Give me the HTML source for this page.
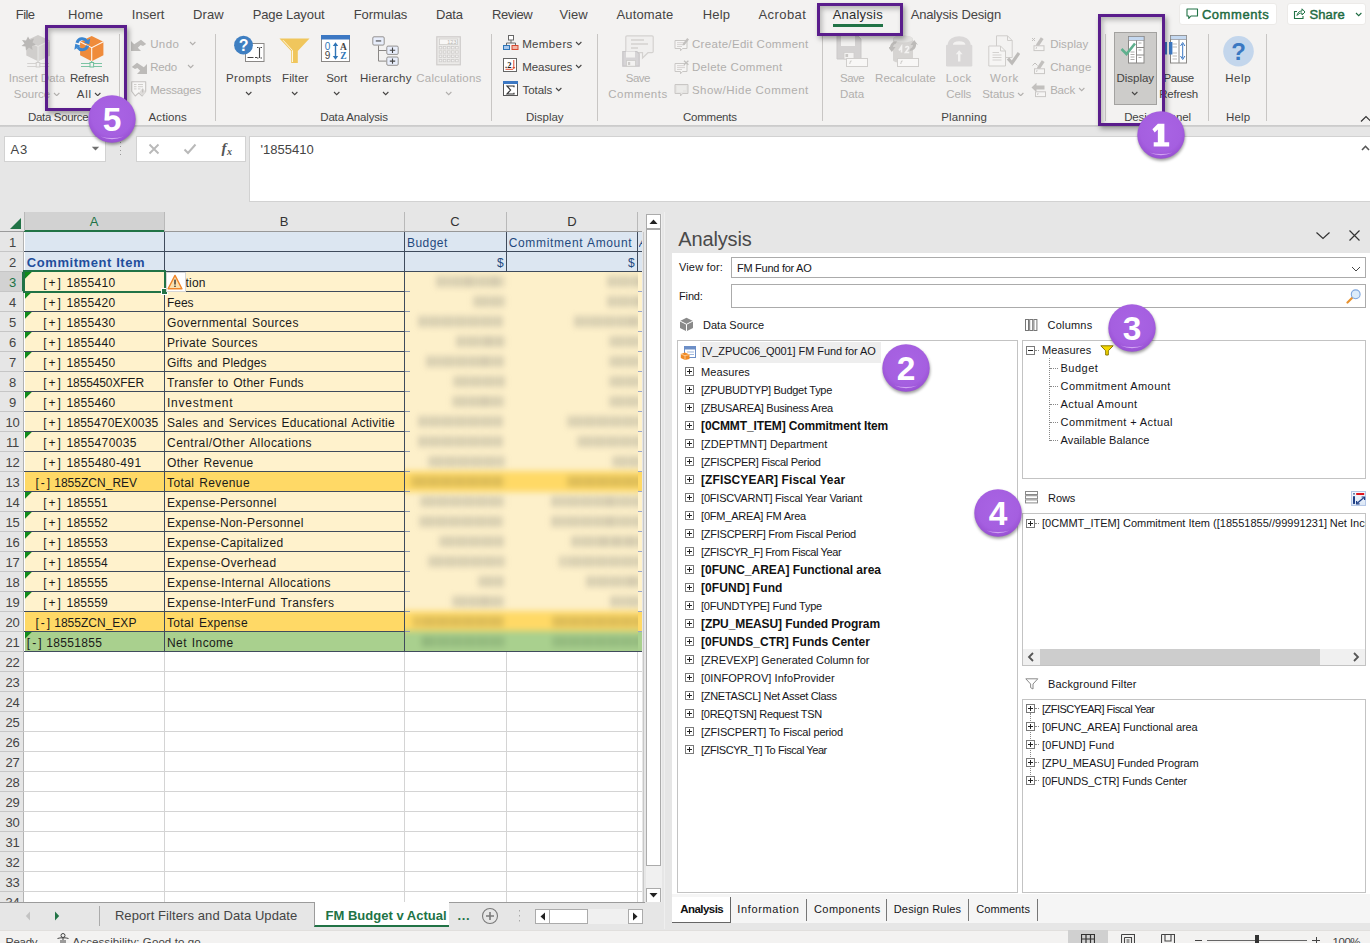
<!DOCTYPE html>
<html><head><meta charset="utf-8"><title>Excel</title><style>html,body{margin:0;padding:0;overflow:hidden;font-family:"Liberation Sans",sans-serif;}body{width:1370px;height:943px;background:#e6e6e6;}#root{position:relative;width:1370px;height:943px;overflow:hidden;background:#e6e6e6;}.b{position:absolute;display:block;}.t{position:absolute;white-space:pre;line-height:normal;display:block;}</style></head><body><div id="root"><div class="b" style="left:0px;top:0px;width:1370px;height:126px;background:#f3f2f1;"></div><div class="b" style="left:0px;top:125px;width:1370px;height:10px;background:linear-gradient(#c9c9c9,#d8d8d8 30%,#e2e2e2 65%,#e6e6e6);"></div><span class="t" style="left:15.78px;top:6.80px;font-size:13px;color:#454443;letter-spacing:-0.561px;">File</span><span class="t" style="left:67.98px;top:6.80px;font-size:13px;color:#454443;letter-spacing:0.128px;">Home</span><span class="t" style="left:131.78px;top:6.80px;font-size:13px;color:#454443;letter-spacing:0.011px;">Insert</span><span class="t" style="left:192.88px;top:6.80px;font-size:13px;color:#454443;letter-spacing:0.142px;">Draw</span><span class="t" style="left:252.68px;top:6.80px;font-size:13px;color:#454443;letter-spacing:-0.105px;">Page Layout</span><span class="t" style="left:353.78px;top:6.80px;font-size:13px;color:#454443;letter-spacing:-0.088px;">Formulas</span><span class="t" style="left:435.98px;top:6.80px;font-size:13px;color:#454443;letter-spacing:-0.166px;">Data</span><span class="t" style="left:491.98px;top:6.80px;font-size:13px;color:#454443;letter-spacing:-0.391px;">Review</span><span class="t" style="left:559.48px;top:6.80px;font-size:13px;color:#454443;letter-spacing:0.072px;">View</span><span class="t" style="left:616.48px;top:6.80px;font-size:13px;color:#454443;letter-spacing:0.159px;">Automate</span><span class="t" style="left:702.78px;top:6.80px;font-size:13px;color:#454443;letter-spacing:0.140px;">Help</span><span class="t" style="left:758.48px;top:6.80px;font-size:13px;color:#454443;letter-spacing:0.426px;">Acrobat</span><span class="t" style="left:832.68px;top:6.80px;font-size:13px;color:#2b2b2b;letter-spacing:0.221px;">Analysis</span><span class="t" style="left:910.68px;top:6.80px;font-size:13px;color:#454443;letter-spacing:-0.145px;">Analysis Design</span><div class="b" style="left:833px;top:24px;width:50px;height:3px;background:#217346;"></div><div class="b" style="left:1179px;top:3px;width:98px;height:22px;background:#fff;border-radius:3px;border:1px solid #eceae8;box-sizing:border-box;"></div><svg class="b" style="left:1186px;top:8px;" width="13" height="12" viewBox="0 0 13 12"><path d="M1 1 H11.5 V8 H5 L2.8 10.5 V8 H1 Z" fill="none" stroke="#217346" stroke-width="1.1" stroke-linejoin="round"/></svg><span class="t" style="left:1201.88px;top:6.50px;font-size:13px;color:#1e6b41;letter-spacing:0.559px;-webkit-text-stroke:0.45px #1e6b41;">Comments</span><div class="b" style="left:1287px;top:3px;width:79px;height:22px;background:#fff;border-radius:3px;border:1px solid #eceae8;box-sizing:border-box;"></div><svg class="b" style="left:1293px;top:7px;" width="13" height="13" viewBox="0 0 13 13"><path d="M4 4.5 H1.5 V11.5 H10 V9" fill="none" stroke="#217346" stroke-width="1.1"/><path d="M4 8.5 C4.5 5.5 6.5 4 9 4 V1.8 L12 5 L9 8 V6 C7 6 5.2 6.8 4 8.5 Z" fill="none" stroke="#217346" stroke-width="1" stroke-linejoin="round"/></svg><span class="t" style="left:1309.48px;top:6.50px;font-size:13px;color:#1e6b41;letter-spacing:0.117px;-webkit-text-stroke:0.45px #1e6b41;">Share</span><svg class="b" style="left:1354.6px;top:12.15px;" width="7.4" height="4.7" viewBox="0 0 7.4 4.7"><path d="M1 1 L3.7 3.7 L6.4 1" stroke="#1e6b41" stroke-width="1.1" fill="none"/></svg><div class="b" style="left:119px;top:34px;width:1px;height:87px;background:#c8c6c4;"></div><div class="b" style="left:215px;top:34px;width:1px;height:87px;background:#c8c6c4;"></div><div class="b" style="left:491px;top:34px;width:1px;height:87px;background:#c8c6c4;"></div><div class="b" style="left:597px;top:34px;width:1px;height:87px;background:#c8c6c4;"></div><div class="b" style="left:822px;top:34px;width:1px;height:87px;background:#c8c6c4;"></div><div class="b" style="left:1105px;top:34px;width:1px;height:87px;background:#c8c6c4;"></div><div class="b" style="left:1208px;top:34px;width:1px;height:87px;background:#c8c6c4;"></div><div class="b" style="left:1266px;top:34px;width:1px;height:87px;background:#c8c6c4;"></div><span class="t" style="left:28.04px;top:110.50px;font-size:11.5px;color:#444;letter-spacing:-0.340px;">Data Source</span><span class="t" style="left:148.54px;top:110.50px;font-size:11.5px;color:#444;letter-spacing:0.103px;">Actions</span><span class="t" style="left:320.24px;top:110.50px;font-size:11.5px;color:#444;letter-spacing:-0.163px;">Data Analysis</span><span class="t" style="left:526.04px;top:110.50px;font-size:11.5px;color:#444;letter-spacing:-0.031px;">Display</span><span class="t" style="left:683.04px;top:110.50px;font-size:11.5px;color:#444;letter-spacing:-0.239px;">Comments</span><span class="t" style="left:941.34px;top:110.50px;font-size:11.5px;color:#444;letter-spacing:0.110px;">Planning</span><span class="t" style="left:1124.14px;top:110.50px;font-size:11.5px;color:#444;letter-spacing:-0.143px;">Design Panel</span><span class="t" style="left:1226.04px;top:110.50px;font-size:11.5px;color:#444;letter-spacing:0.126px;">Help</span><svg class="b" style="left:1360px;top:115px;" width="11" height="8" viewBox="0 0 11 8"><path d="M1 6.5 L6 1.5 L11 6.5" stroke="#333" stroke-width="1.2" fill="none"/></svg><svg class="b" style="left:21px;top:34px;" width="30" height="34" viewBox="0 0 30 34"><path d="M17 1 L29 6.5 L29 21.5 L17 27.3 L5.3 21.5 L5.3 6.5 Z" fill="#d0cecc"/><path d="M17 12.5 L29 6.5 L29 21.5 L17 27.3 Z" fill="#d8d6d4"/><path d="M5.3 6.5 L17 12.5 L29 6.5 M17 12.5 V27.3" stroke="#e6e5e3" stroke-width="1.1" fill="none"/><path d="M7 2.5 L9 6 L13 4.5 L11.5 8.5 L15 10.5 L11 12 L11.5 16 L8 13.5 L5 16.5 L4.5 12.5 L0.5 12 L3.5 9.5 L1 6 L5 6.5 Z" fill="#bab8b6"/><path d="M17 27 V30" stroke="#cfcdcb" stroke-width="1.2"/><path d="M6.2 29.5 H28 M6.2 32.5 H28" stroke="#d4d2d0" stroke-width="1"/><rect x="15.2" y="28.5" width="3.6" height="4.5" fill="#f3f2f1" stroke="#cfcdcb" stroke-width="1"/></svg><span class="t" style="left:8.74px;top:71.80px;font-size:11.5px;color:#b1afad;letter-spacing:0.018px;">Insert Data</span><span class="t" style="left:13.84px;top:87.60px;font-size:11.5px;color:#b1afad;letter-spacing:-0.041px;">Source</span><svg class="b" style="left:52.599999999999994px;top:91.65px;" width="7.4" height="4.7" viewBox="0 0 7.4 4.7"><path d="M1 1 L3.7 3.7 L6.4 1" stroke="#b1afad" stroke-width="1.1" fill="none"/></svg><svg class="b" style="left:74px;top:35px;" width="31" height="34" viewBox="0 0 31 34"><path d="M17.7 0.9 L29.4 6.8 L29.4 20.2 L17.7 26.3 L6.1 20.2 L6.1 6.8 Z" fill="#ef8b3b"/><path d="M6.1 6.8 L17.7 12.7 L29.4 6.8 M17.7 12.7 V26.3" stroke="#fff" stroke-width="1.1" fill="none" stroke-opacity=".92"/><path d="M2.99 7.78 A5.5 5.5 0 0 1 12.8 6.04" stroke="#3b86d0" stroke-width="3" fill="none"/><path d="M15.3 9.6 L16.2 3.6 L9.8 7.6 Z" fill="#3b86d0"/><path d="M13.61 10.62 A5.5 5.5 0 0 1 3.8 12.36" stroke="#3b86d0" stroke-width="3" fill="none"/><path d="M1.3 8.8 L0.4 14.8 L6.8 10.8 Z" fill="#3b86d0"/><path d="M17.7 26 V29" stroke="#6fbf9b" stroke-width="1.2"/><path d="M7 28.5 H28 M7 31.5 H28" stroke="#7cc4a4" stroke-width="1"/><rect x="16" y="27.5" width="3.6" height="4.5" fill="#f3f2f1" stroke="#6fbf9b" stroke-width="1"/></svg><span class="t" style="left:70.04px;top:71.80px;font-size:11.5px;color:#454443;letter-spacing:-0.241px;">Refresh</span><span class="t" style="left:76.74px;top:87.60px;font-size:11.5px;color:#454443;letter-spacing:0.827px;">All</span><svg class="b" style="left:93.89999999999999px;top:91.65px;" width="7.4" height="4.7" viewBox="0 0 7.4 4.7"><path d="M1 1 L3.7 3.7 L6.4 1" stroke="#454443" stroke-width="1.1" fill="none"/></svg><svg class="b" style="left:131px;top:39px;" width="16" height="13" viewBox="0 0 16 13"><path d="M0 1.9 L0 12 L10 12 L6.8 8.8 L9.6 5.9 L12 7.1 L15.2 5 L10 0.8 L3.2 5.2 Z" fill="#bdbbb9"/></svg><span class="t" style="left:150.14px;top:37.80px;font-size:11.5px;color:#b1afad;letter-spacing:0.412px;">Undo</span><svg class="b" style="left:188.9px;top:41.15px;" width="7.4" height="4.7" viewBox="0 0 7.4 4.7"><path d="M1 1 L3.7 3.7 L6.4 1" stroke="#b1afad" stroke-width="1.1" fill="none"/></svg><svg class="b" style="left:131.3px;top:62px;" width="17" height="13" viewBox="0 0 17 13"><path d="M16 1.9 L16 12 L6 12 L9.2 8.8 L6.4 5.9 L4 7.1 L0.8 5 L6 0.8 L12.8 5.2 Z" fill="#bdbbb9"/></svg><span class="t" style="left:150.14px;top:60.50px;font-size:11.5px;color:#b1afad;letter-spacing:-0.155px;">Redo</span><svg class="b" style="left:186.8px;top:63.85000000000001px;" width="7.4" height="4.7" viewBox="0 0 7.4 4.7"><path d="M1 1 L3.7 3.7 L6.4 1" stroke="#b1afad" stroke-width="1.1" fill="none"/></svg><svg class="b" style="left:130.8px;top:80.6px;" width="16" height="16" viewBox="0 0 16 16"><path d="M0.7 0.7 H14.7 V10.2 L11.2 15 L7.7 11.8 L4.2 15 L0.7 10.2 Z" fill="#f7f6f5" stroke="#c6c4c2" stroke-width="1.1" stroke-linejoin="round"/><path d="M3 3.5 H5.5 M7 3.5 H12 M3 5.7 H5.5 M7 5.7 H12 M3 7.9 H5.5 M7 7.9 H9.5" stroke="#d0cecc" stroke-width="1"/><path d="M8.2 11.6 L11.6 6.8 L15 11.6 L11.6 14.6 Z" fill="#dddbd9"/><rect x="11.2" y="8.2" width="1" height="3.2" fill="#bdbbb9"/></svg><span class="t" style="left:150.14px;top:83.70px;font-size:11.5px;color:#b1afad;letter-spacing:-0.198px;">Messages</span><svg class="b" style="left:234px;top:35px;" width="31" height="28" viewBox="0 0 31 28"><rect x="11.5" y="8.5" width="18.5" height="18" fill="#fff" stroke="#8a8886" stroke-width="1"/><path d="M13.5 22.5 H19.5 M21 22.5 H23" stroke="#444" stroke-width="1"/><path d="M23 12.5 H24.5 M26.5 12.5 H28 M23 23 H24.5 M26.5 23 H28 M25.5 12.5 V23" stroke="#444" stroke-width="1.1" fill="none"/><circle cx="9.5" cy="10.2" r="9.4" fill="#3f7fc1"/><text x="9.6" y="16" font-family="Liberation Sans" font-weight="700" font-size="16" fill="#fff" text-anchor="middle">?</text></svg><span class="t" style="left:225.94px;top:71.80px;font-size:11.5px;color:#454443;letter-spacing:0.418px;">Prompts</span><svg class="b" style="left:244.8px;top:91.35000000000001px;" width="7.4" height="4.7" viewBox="0 0 7.4 4.7"><path d="M1 1 L3.7 3.7 L6.4 1" stroke="#454443" stroke-width="1.1" fill="none"/></svg><svg class="b" style="left:279px;top:38px;" width="31" height="26" viewBox="0 0 31 26"><path d="M0.5 0.5 H30.5 L18.8 13 V25 H12.2 V13 Z" fill="#f0c65c"/><path d="M4 2.2 L13.5 12.5 V24" stroke="#fff6dd" stroke-width="1" fill="none"/></svg><span class="t" style="left:281.94px;top:71.80px;font-size:11.5px;color:#454443;letter-spacing:0.175px;">Filter</span><svg class="b" style="left:290.7px;top:91.35000000000001px;" width="7.4" height="4.7" viewBox="0 0 7.4 4.7"><path d="M1 1 L3.7 3.7 L6.4 1" stroke="#454443" stroke-width="1.1" fill="none"/></svg><svg class="b" style="left:321px;top:35px;" width="29" height="27" viewBox="0 0 29 27"><rect x="0.5" y="0.5" width="28" height="26" fill="#fff" stroke="#8a8886" stroke-width="1"/><rect x="0" y="0" width="29" height="4.5" fill="#3c78c3"/><text x="6.5" y="14.8" font-family="Liberation Sans" font-size="10" fill="#2e75b6" text-anchor="middle">0</text><text x="6.5" y="24.3" font-family="Liberation Sans" font-size="10" fill="#444" text-anchor="middle">9</text><text x="22.5" y="15" font-family="Liberation Serif" font-weight="700" font-size="9.5" fill="#444" text-anchor="middle">A</text><text x="22.5" y="24.3" font-family="Liberation Serif" font-weight="700" font-size="9.5" fill="#2e75b6" text-anchor="middle">Z</text><path d="M14.5 9 V23" stroke="#2e75b6" stroke-width="1.4"/><path d="M11.8 11 L14.5 7.3 L17.2 11 Z M11.8 21 L14.5 24.7 L17.2 21 Z" fill="#2e75b6"/></svg><span class="t" style="left:326.14px;top:71.80px;font-size:11.5px;color:#454443;letter-spacing:0.014px;">Sort</span><svg class="b" style="left:332.6px;top:91.35000000000001px;" width="7.4" height="4.7" viewBox="0 0 7.4 4.7"><path d="M1 1 L3.7 3.7 L6.4 1" stroke="#454443" stroke-width="1.1" fill="none"/></svg><svg class="b" style="left:372px;top:36px;" width="27" height="30" viewBox="0 0 27 30"><path d="M6.5 9.6 V25.1 H14.5 M6.5 14.5 H14.5" stroke="#8a8886" stroke-width="1" fill="none"/><rect x="0.8" y="0.8" width="11.4" height="8.3" rx="1.2" fill="#e8eefb" stroke="#8a8886" stroke-width="0.9"/><path d="M3.8 4.95 h5.4" stroke="#444" stroke-width="1.1"/><rect x="14.8" y="10.1" width="11.4" height="8.3" rx="1.2" fill="#e8eefb" stroke="#8a8886" stroke-width="0.9"/><path d="M17.8 14.25 h5.4 M20.5 11.549999999999999 v5.4" stroke="#444" stroke-width="1.1"/><rect x="14.8" y="21.0" width="11.4" height="8.3" rx="1.2" fill="#e8eefb" stroke="#8a8886" stroke-width="0.9"/><path d="M17.8 25.15 h5.4 M20.5 22.45 v5.4" stroke="#444" stroke-width="1.1"/></svg><span class="t" style="left:360.04px;top:71.80px;font-size:11.5px;color:#454443;letter-spacing:0.277px;">Hierarchy</span><svg class="b" style="left:381.7px;top:91.35000000000001px;" width="7.4" height="4.7" viewBox="0 0 7.4 4.7"><path d="M1 1 L3.7 3.7 L6.4 1" stroke="#454443" stroke-width="1.1" fill="none"/></svg><svg class="b" style="left:436px;top:36px;" width="25" height="30" viewBox="0 0 25 30"><rect x="0.8" y="0.8" width="23.5" height="28" fill="#ebeae8" stroke="#cfcdcb" stroke-width="1.2"/><rect x="3.5" y="3" width="18" height="5.6" fill="#f8f7f6" stroke="#cfcdcb" stroke-width="0.8"/><text x="20.5" y="8" font-family="Liberation Sans" font-size="5.5" fill="#b5b3b1" text-anchor="end">123</text><rect x="3.2" y="10.5" width="2.6" height="2.4" fill="#f3f2f1" stroke="#cfcdcb" stroke-width="0.8"/><rect x="3.2" y="14.8" width="2.6" height="2.4" fill="#f3f2f1" stroke="#cfcdcb" stroke-width="0.8"/><rect x="3.2" y="19.1" width="2.6" height="2.4" fill="#f3f2f1" stroke="#cfcdcb" stroke-width="0.8"/><rect x="3.2" y="23.4" width="2.6" height="2.4" fill="#f3f2f1" stroke="#cfcdcb" stroke-width="0.8"/><rect x="7.3" y="10.5" width="2.6" height="2.4" fill="#f3f2f1" stroke="#cfcdcb" stroke-width="0.8"/><rect x="7.3" y="14.8" width="2.6" height="2.4" fill="#f3f2f1" stroke="#cfcdcb" stroke-width="0.8"/><rect x="7.3" y="19.1" width="2.6" height="2.4" fill="#f3f2f1" stroke="#cfcdcb" stroke-width="0.8"/><rect x="7.3" y="23.4" width="2.6" height="2.4" fill="#f3f2f1" stroke="#cfcdcb" stroke-width="0.8"/><rect x="11.4" y="10.5" width="2.6" height="2.4" fill="#f3f2f1" stroke="#cfcdcb" stroke-width="0.8"/><rect x="11.4" y="14.8" width="2.6" height="2.4" fill="#f3f2f1" stroke="#cfcdcb" stroke-width="0.8"/><rect x="11.4" y="19.1" width="2.6" height="2.4" fill="#f3f2f1" stroke="#cfcdcb" stroke-width="0.8"/><rect x="11.4" y="23.4" width="2.6" height="2.4" fill="#f3f2f1" stroke="#cfcdcb" stroke-width="0.8"/><rect x="15.5" y="10.5" width="2.6" height="2.4" fill="#f3f2f1" stroke="#cfcdcb" stroke-width="0.8"/><rect x="15.5" y="14.8" width="2.6" height="2.4" fill="#f3f2f1" stroke="#cfcdcb" stroke-width="0.8"/><rect x="15.5" y="19.1" width="2.6" height="2.4" fill="#f3f2f1" stroke="#cfcdcb" stroke-width="0.8"/><rect x="15.5" y="23.4" width="2.6" height="2.4" fill="#f3f2f1" stroke="#cfcdcb" stroke-width="0.8"/><rect x="19.6" y="10.5" width="2.6" height="2.4" fill="#f3f2f1" stroke="#cfcdcb" stroke-width="0.8"/><rect x="19.6" y="14.8" width="2.6" height="2.4" fill="#f3f2f1" stroke="#cfcdcb" stroke-width="0.8"/><rect x="19.6" y="19.1" width="2.6" height="2.4" fill="#f3f2f1" stroke="#cfcdcb" stroke-width="0.8"/><rect x="19.6" y="23.4" width="2.6" height="2.4" fill="#f3f2f1" stroke="#cfcdcb" stroke-width="0.8"/></svg><span class="t" style="left:416.24px;top:71.80px;font-size:11.5px;color:#b1afad;letter-spacing:0.225px;">Calculations</span><svg class="b" style="left:444.7px;top:91.35000000000001px;" width="7.4" height="4.7" viewBox="0 0 7.4 4.7"><path d="M1 1 L3.7 3.7 L6.4 1" stroke="#b1afad" stroke-width="1.1" fill="none"/></svg><svg class="b" style="left:503px;top:35px;" width="16" height="16" viewBox="0 0 16 16"><path d="M8 5 V8 M3.5 11 V8 H12.5 V11" stroke="#666" stroke-width="1" fill="none"/><rect x="5.5" y="0.5" width="5" height="4.5" fill="#fff" stroke="#666" stroke-width="1"/><rect x="0.5" y="10.5" width="6" height="4" fill="#a9c8ec" stroke="#2e75b6" stroke-width="1"/><rect x="9" y="10.5" width="6" height="4" fill="#f3b4a6" stroke="#d6492f" stroke-width="1"/></svg><span class="t" style="left:522.14px;top:37.80px;font-size:11.5px;color:#454443;letter-spacing:0.383px;">Members</span><svg class="b" style="left:574.8px;top:41.449999999999996px;" width="7.4" height="4.7" viewBox="0 0 7.4 4.7"><path d="M1 1 L3.7 3.7 L6.4 1" stroke="#454443" stroke-width="1.1" fill="none"/></svg><svg class="b" style="left:503px;top:58px;" width="14" height="14" viewBox="0 0 14 14"><rect x="0.5" y="0.5" width="13" height="13" fill="#fff" stroke="#666" stroke-width="1"/><text x="2" y="9.5" font-family="Liberation Serif" font-weight="700" font-size="8.5" fill="#222">.2</text><path d="M2.5 11.3 H10" stroke="#e04a2f" stroke-width="1"/><path d="M10.8 2 V10" stroke="#e04a2f" stroke-width="1"/><path d="M9.3 9 L10.8 11.5 L12.3 9 Z" fill="#e04a2f"/></svg><span class="t" style="left:522.14px;top:60.50px;font-size:11.5px;color:#454443;letter-spacing:-0.038px;">Measures</span><svg class="b" style="left:574.8px;top:64.15px;" width="7.4" height="4.7" viewBox="0 0 7.4 4.7"><path d="M1 1 L3.7 3.7 L6.4 1" stroke="#454443" stroke-width="1.1" fill="none"/></svg><svg class="b" style="left:503px;top:81px;" width="15" height="15" viewBox="0 0 15 15"><rect x="0.5" y="0.5" width="14" height="14" fill="#fff" stroke="#555" stroke-width="1"/><rect x="0" y="0" width="15" height="3" fill="#3c78c3"/><path d="M11 6.2 V5 H4 L7.6 9 L4 13 H11 V11.8" stroke="#333" stroke-width="1.15" fill="none"/></svg><span class="t" style="left:522.54px;top:83.70px;font-size:11.5px;color:#454443;letter-spacing:-0.082px;">Totals</span><svg class="b" style="left:554.8px;top:87.35000000000001px;" width="7.4" height="4.7" viewBox="0 0 7.4 4.7"><path d="M1 1 L3.7 3.7 L6.4 1" stroke="#454443" stroke-width="1.1" fill="none"/></svg><svg class="b" style="left:622px;top:35px;" width="32" height="32" viewBox="0 0 32 32"><path d="M5 0.8 H30 Q31.2 0.8 31.2 2 V16.5 Q31.2 17.7 30 17.7 H26 L20.5 23 V17.7 H5 Q3.8 17.7 3.8 16.5 V2 Q3.8 0.8 5 0.8 Z" fill="#f0efee" stroke="#d4d2d0" stroke-width="1.2"/><path d="M9 5 H22 M9 9 H26 M9 13 H16" stroke="#d4d2d0" stroke-width="1.6"/><path d="M0.8 16.5 H14.8 L17.2 18.8 V31.2 H0.8 Z" fill="#d6d4d6" stroke="#c8c6c8" stroke-width="1.2"/><rect x="4" y="16.5" width="9" height="6" fill="#f3f2f1"/><rect x="4.5" y="25.5" width="9" height="5.7" fill="#f3f2f1" stroke="#cdcbc9" stroke-width="0.8"/><rect x="6" y="27" width="2.2" height="3" fill="#cdcbc9"/></svg><span class="t" style="left:625.84px;top:71.80px;font-size:11.5px;color:#b1afad;letter-spacing:-0.561px;">Save</span><span class="t" style="left:608.24px;top:87.60px;font-size:11.5px;color:#b1afad;letter-spacing:0.475px;">Comments</span><svg class="b" style="left:674px;top:37px;" width="16" height="15" viewBox="0 0 16 15"><path d="M1 3.5 H13 V11.5 H8.5 L6.5 13.8 V11.5 H1 Z" fill="#f6f5f4" stroke="#c9c7c5" stroke-width="1"/><path d="M3 5.7 H11 M3 7.6 H11 M3 9.5 H8" stroke="#d2d0ce" stroke-width="0.9"/><path d="M9 6.5 L13.2 1 L15 2.4 L10.8 7.8 L8.6 8.6 Z" fill="#c2c0be"/></svg><span class="t" style="left:691.94px;top:37.80px;font-size:11.5px;color:#b1afad;letter-spacing:0.320px;">Create/Edit Comment</span><svg class="b" style="left:674px;top:60px;" width="16" height="15" viewBox="0 0 16 15"><path d="M1 3.5 H13 V11.5 H8.5 L6.5 13.8 V11.5 H1 Z" fill="#f6f5f4" stroke="#c9c7c5" stroke-width="1"/><path d="M3 5.7 H11 M3 7.6 H11 M3 9.5 H8" stroke="#d2d0ce" stroke-width="0.9"/><path d="M10 0.8 L14.4 4.8 M14.4 0.8 L10 4.8" stroke="#c2c0be" stroke-width="1.3"/></svg><span class="t" style="left:691.94px;top:60.50px;font-size:11.5px;color:#b1afad;letter-spacing:0.311px;">Delete Comment</span><svg class="b" style="left:674px;top:83px;" width="16" height="15" viewBox="0 0 16 15"><path d="M1 1.5 H14 V10.5 H8.5 L6.5 13 V10.5 H1 Z" fill="#e6e5e3" stroke="#c9c7c5" stroke-width="1"/><path d="M3 4 H12 M3 6 H12 M3 8 H9" stroke="#f3f2f1" stroke-width="0.9"/></svg><span class="t" style="left:691.94px;top:83.70px;font-size:11.5px;color:#b1afad;letter-spacing:0.480px;">Show/Hide Comment</span><svg class="b" style="left:836px;top:30px;" width="33" height="38" viewBox="0 0 33 38"><path d="M1 6 H22 L25 9 V29 H1 Z" fill="#d4d2d2" stroke="#cbc9c9" stroke-width="1"/><rect x="5" y="6" width="14" height="10" fill="#f3f2f1"/><rect x="8" y="22.5" width="10" height="6.5" fill="#f3f2f1" stroke="#d0cecc" stroke-width="0.8"/><rect x="9.5" y="24" width="2.6" height="3" fill="#c9c7c5"/><rect x="10.5" y="28.5" width="21" height="8" fill="#f8f7f6" stroke="#d0cecc" stroke-width="1"/><path d="M13.7 34.0 l0.8 -3 h1.2" stroke="#c2c0be" stroke-width="0.8" fill="none"/></svg><span class="t" style="left:840.04px;top:71.80px;font-size:11.5px;color:#b1afad;letter-spacing:-0.561px;">Save</span><span class="t" style="left:840.04px;top:87.60px;font-size:11.5px;color:#b1afad;letter-spacing:-0.087px;">Data</span><svg class="b" style="left:889px;top:30px;" width="33" height="38" viewBox="0 0 33 38"><path d="M4 9 C4 4.5 24 4.5 24 9 V30 C24 34 4 34 4 30 Z" fill="#d6d4d2"/><ellipse cx="14" cy="9" rx="10" ry="3.6" fill="#e4e3e1"/><path d="M1 17 C1.5 13 4.5 11 8 11.5 L6.5 14 C5 14.2 4.2 15.4 4 17 L6.5 17 L2.8 22 L-1 17 Z" fill="#bdbbb9"/><path d="M27 14 C27.5 18 24.5 21 20.5 21 L21.5 18.5 C23 18 23.8 16.6 24 15 L21.5 15 L25.2 10 L29 15 Z" fill="#bdbbb9"/><path d="M10 20.5 L12.5 16.5 V22.5 M16.5 17.8 C17 16 20 16.2 19.6 18.2 L16.5 22.5 H20.2" stroke="#f3f2f1" stroke-width="1.6" fill="none"/><rect x="8.5" y="28.5" width="21" height="8" fill="#f8f7f6" stroke="#d0cecc" stroke-width="1"/><path d="M11.7 34.0 l0.8 -3 h1.2" stroke="#c2c0be" stroke-width="0.8" fill="none"/></svg><span class="t" style="left:875.04px;top:71.80px;font-size:11.5px;color:#b1afad;letter-spacing:0.044px;">Recalculate</span><svg class="b" style="left:945px;top:36px;" width="28" height="31" viewBox="0 0 28 31"><path d="M5.2 12 V9.5 C5.2 0.5 23.1 0.5 23.1 9.5 V12" stroke="#dad8d8" stroke-width="5.2" fill="none"/><rect x="1" y="8.8" width="26.3" height="21.6" rx="1.2" fill="#dad8d8"/><path d="M14.2 14.2 L17.6 18.2 H15.4 V25.5 H13 V18.2 H10.8 Z" fill="#f3f2f1"/></svg><span class="t" style="left:945.84px;top:71.80px;font-size:11.5px;color:#b1afad;letter-spacing:0.413px;">Lock</span><span class="t" style="left:946.34px;top:87.60px;font-size:11.5px;color:#b1afad;letter-spacing:-0.132px;">Cells</span><svg class="b" style="left:988px;top:35px;" width="32" height="32" viewBox="0 0 32 32"><path d="M8.5 0.8 H19.5 L24.2 5.5 V22.5 H8.5 Z" fill="#f3f2f1" stroke="#cfcdcb" stroke-width="1"/><path d="M19.5 0.8 V5.5 H24.2" stroke="#cfcdcb" stroke-width="1" fill="none"/><path d="M0.8 11 H12.5 L17.5 16 V31 H0.8 Z" fill="#f6f5f4" stroke="#cfcdcb" stroke-width="1"/><path d="M12.5 11 V16 H17.5" stroke="#cfcdcb" stroke-width="1" fill="none"/><path d="M4.5 17.5 H11 M4.5 20 H13.5 M4.5 22.5 H13.5 M4.5 25 H13.5" stroke="#d4d2d0" stroke-width="1"/><path d="M20 23.5 L24 28 L31 18" stroke="#bdbbb9" stroke-width="3.2" fill="none"/></svg><span class="t" style="left:990.04px;top:71.80px;font-size:11.5px;color:#b1afad;letter-spacing:0.570px;">Work</span><span class="t" style="left:982.14px;top:87.60px;font-size:11.5px;color:#b1afad;letter-spacing:-0.035px;">Status</span><svg class="b" style="left:1017.3px;top:91.65px;" width="7.4" height="4.7" viewBox="0 0 7.4 4.7"><path d="M1 1 L3.7 3.7 L6.4 1" stroke="#b1afad" stroke-width="1.1" fill="none"/></svg><svg class="b" style="left:1031px;top:36px;" width="16" height="16" viewBox="0 0 16 16"><path d="M1 2 L4 5 M4 2 L1 5" stroke="#c2c0be" stroke-width="1"/><path d="M5.2 8.2 L9.8 1.2 L12.6 3 L8 10 L5 10.8 Z" fill="#c2c0be"/><rect x="3" y="9.8" width="10" height="4.8" fill="#f6f5f4" stroke="#c9c7c5" stroke-width="1"/><path d="M5 13 l0.6 -2" stroke="#c2c0be" stroke-width="0.8"/></svg><span class="t" style="left:1050.14px;top:37.80px;font-size:11.5px;color:#b1afad;letter-spacing:0.069px;">Display</span><svg class="b" style="left:1031px;top:59px;" width="16" height="16" viewBox="0 0 16 16"><path d="M1.5 6.5 L4 4 L6.5 6.5" stroke="#c2c0be" stroke-width="1" fill="none"/><path d="M6.2 8.2 L10.8 1.2 L13.6 3 L9 10 L6 10.8 Z" fill="#c2c0be"/><rect x="3.5" y="9.8" width="10" height="4.8" fill="#f6f5f4" stroke="#c9c7c5" stroke-width="1"/><path d="M5.5 13 l0.6 -2" stroke="#c2c0be" stroke-width="0.8"/></svg><span class="t" style="left:1050.14px;top:60.50px;font-size:11.5px;color:#b1afad;letter-spacing:0.188px;">Change</span><svg class="b" style="left:1031px;top:82px;" width="16" height="16" viewBox="0 0 16 16"><path d="M0.5 5.5 L5.5 0.8 V3.5 H13.5 V7.5 H5.5 V10.2 Z" fill="#c2c0be"/><rect x="4.5" y="9.8" width="10" height="4.8" fill="#f6f5f4" stroke="#c9c7c5" stroke-width="1"/><path d="M6.5 13 l0.6 -2" stroke="#c2c0be" stroke-width="0.8"/></svg><span class="t" style="left:1050.14px;top:83.70px;font-size:11.5px;color:#b1afad;letter-spacing:-0.181px;">Back</span><svg class="b" style="left:1078.3px;top:87.35000000000001px;" width="7.4" height="4.7" viewBox="0 0 7.4 4.7"><path d="M1 1 L3.7 3.7 L6.4 1" stroke="#b1afad" stroke-width="1.1" fill="none"/></svg><div class="b" style="left:1114px;top:32px;width:43px;height:73px;background:#cdccca;border:1px solid #a3a2a0;box-sizing:border-box;"></div><svg class="b" style="left:1120px;top:35px;" width="26" height="30" viewBox="0 0 26 30"><rect x="8.5" y="1.5" width="15.5" height="26.5" fill="#fff" stroke="#8a8886" stroke-width="1"/><rect x="8.5" y="1.5" width="15.5" height="3.8" fill="#c5d9f1" stroke="#8a8886" stroke-width="0.6"/><path d="M16.5 5.3 V28 M16.5 12.5 H24 M16.5 20 H24" stroke="#8a8886" stroke-width="1"/><path d="M18.5 8 H21.5 M18.5 15 H21.5 M18.5 22.5 H21.5 M10.5 17 H14.5 M10.5 19.5 H14.5 M10.5 22 H14.5 M10.5 24.5 H14.5" stroke="#9a9896" stroke-width="0.8"/><path d="M1.5 14 L6.5 19 L15 8.5" stroke="#5fb08e" stroke-width="2.6" fill="none"/></svg><span class="t" style="left:1116.44px;top:71.80px;font-size:11.5px;color:#454443;letter-spacing:-0.014px;">Display</span><svg class="b" style="left:1130.8px;top:91.35000000000001px;" width="7.4" height="4.7" viewBox="0 0 7.4 4.7"><path d="M1 1 L3.7 3.7 L6.4 1" stroke="#454443" stroke-width="1.1" fill="none"/></svg><svg class="b" style="left:1164px;top:35px;" width="24" height="29" viewBox="0 0 24 29"><rect x="6.5" y="0.5" width="16" height="27.5" fill="#fff" stroke="#8a8886" stroke-width="1"/><rect x="6.5" y="0.5" width="16" height="4.2" fill="#c5d9f1" stroke="#8a8886" stroke-width="0.6"/><path d="M15 4.7 V28" stroke="#8a8886" stroke-width="1"/><path d="M8.5 9 H13 M8.5 12 H13 M8.5 18 H13 M8.5 21 H13 M8.5 24 H13" stroke="#a9a7a5" stroke-width="0.8"/><path d="M18.7 9 V23" stroke="#3c78c3" stroke-width="1"/><path d="M16.5 11 L18.7 7.5 L20.9 11 M16.5 21 L18.7 24.5 L20.9 21" stroke="#3c78c3" stroke-width="1" fill="none"/><rect x="0" y="7" width="3" height="12.5" fill="#3c78c3"/><rect x="5" y="7" width="3.4" height="12.5" fill="#3c78c3"/></svg><span class="t" style="left:1163.54px;top:71.80px;font-size:11.5px;color:#454443;letter-spacing:-0.469px;">Pause</span><span class="t" style="left:1159.24px;top:87.60px;font-size:11.5px;color:#454443;letter-spacing:-0.224px;">Refresh</span><svg class="b" style="left:1223px;top:36px;" width="31" height="31" viewBox="0 0 31 31"><circle cx="15.5" cy="15.3" r="15.3" fill="#c3d6ec"/><text x="15.5" y="24" font-family="Liberation Sans" font-weight="700" font-size="24" fill="#3a78c2" text-anchor="middle">?</text></svg><span class="t" style="left:1225.14px;top:71.80px;font-size:11.5px;color:#454443;letter-spacing:0.593px;">Help</span><div class="b" style="left:0px;top:127px;width:1370px;height:85px;background:#e6e6e6;"></div><div class="b" style="left:4px;top:136px;width:102px;height:26px;background:#fff;border:1px solid #d2d2d2;box-sizing:border-box;"></div><span class="t" style="left:10.48px;top:142.00px;font-size:13px;color:#444;letter-spacing:0.864px;">A3</span><svg class="b" style="left:91px;top:146px;" width="9" height="6" viewBox="0 0 9 6"><path d="M0.8 0.8 L8.2 0.8 L4.5 4.5 Z" fill="#707070"/></svg><svg class="b" style="left:119px;top:141px;" width="3" height="18" viewBox="0 0 3 18"><rect x="1" y="1" width="1" height="1" fill="#999"/><rect x="1" y="5" width="1" height="1" fill="#999"/><rect x="1" y="9" width="1" height="1" fill="#999"/><rect x="1" y="13" width="1" height="1" fill="#999"/></svg><div class="b" style="left:136px;top:136px;width:110px;height:26px;background:#fff;border:1px solid #d2d2d2;box-sizing:border-box;"></div><svg class="b" style="left:148px;top:143px;" width="12" height="12" viewBox="0 0 12 12"><path d="M1.5 1.5 L10.5 10.5 M10.5 1.5 L1.5 10.5" stroke="#b9b9b9" stroke-width="1.9" fill="none"/></svg><svg class="b" style="left:183px;top:143px;" width="14" height="12" viewBox="0 0 14 12"><path d="M1.5 6.5 L5 10 L12.5 1.5" stroke="#b9b9b9" stroke-width="2" fill="none"/></svg><span class="t" style="left:221.50px;top:139.50px;font-size:15px;color:#555;font-weight:700;font-style:italic;font-family:'Liberation Serif',serif;">f</span><span class="t" style="left:227.00px;top:145.50px;font-size:10px;color:#555;font-weight:700;font-style:italic;font-family:'Liberation Serif',serif;">x</span><div class="b" style="left:249px;top:136px;width:1125px;height:66px;background:#fff;border:1px solid #d2d2d2;box-sizing:border-box;"></div><span class="t" style="left:260.48px;top:141.80px;font-size:13px;color:#444;letter-spacing:0.011px;">&#x27;1855410</span><svg class="b" style="left:1361px;top:144px;" width="9" height="8" viewBox="0 0 9 8"><path d="M1 6 L4.5 2.3 L8 6" stroke="#555" stroke-width="1.6" fill="none"/></svg><div class="b" style="left:0px;top:212px;width:642px;height:691px;background:#fff;"></div><div class="b" style="left:0px;top:212px;width:642px;height:19px;background:#e6e6e6;border-bottom:1px solid #9b9b9b;"></div><div class="b" style="left:24px;top:212px;width:140px;height:19px;background:#d2d2d2;border-bottom:2px solid #217346;box-sizing:border-box;height:20px;"></div><div class="b" style="left:24px;top:212px;width:1px;height:19px;background:#b9b9b9;"></div><div class="b" style="left:164px;top:212px;width:1px;height:19px;background:#b9b9b9;"></div><div class="b" style="left:404px;top:212px;width:1px;height:19px;background:#b9b9b9;"></div><div class="b" style="left:506px;top:212px;width:1px;height:19px;background:#b9b9b9;"></div><div class="b" style="left:637px;top:212px;width:1px;height:19px;background:#b9b9b9;"></div><svg class="b" style="left:9px;top:217px;" width="13" height="13" viewBox="0 0 13 13"><path d="M12 1 L12 12 L1 12 Z" fill="#217346"/></svg><span class="t" style="left:94.00px;top:214.00px;font-size:13px;color:#217346;transform:translateX(-50%);">A</span><span class="t" style="left:284.00px;top:214.00px;font-size:13px;color:#333;transform:translateX(-50%);">B</span><span class="t" style="left:455.00px;top:214.00px;font-size:13px;color:#333;transform:translateX(-50%);">C</span><span class="t" style="left:572.00px;top:214.00px;font-size:13px;color:#333;transform:translateX(-50%);">D</span><div class="b" style="left:0px;top:232px;width:24px;height:671px;background:#e6e6e6;border-right:1px solid #b2b2b2;box-sizing:border-box;"></div><div class="b" style="left:0px;top:272px;width:24px;height:19px;background:#d2d2d2;border-right:2px solid #217346;box-sizing:border-box;"></div><div class="b" style="left:0px;top:251px;width:24px;height:1px;background:#c6c6c6;"></div><div class="b" style="left:24px;top:251px;width:618px;height:1px;background:#d4d4d4;"></div><div class="b" style="left:0px;top:271px;width:24px;height:1px;background:#c6c6c6;"></div><div class="b" style="left:24px;top:271px;width:618px;height:1px;background:#d4d4d4;"></div><div class="b" style="left:0px;top:291px;width:24px;height:1px;background:#c6c6c6;"></div><div class="b" style="left:24px;top:291px;width:618px;height:1px;background:#d4d4d4;"></div><div class="b" style="left:0px;top:311px;width:24px;height:1px;background:#c6c6c6;"></div><div class="b" style="left:24px;top:311px;width:618px;height:1px;background:#d4d4d4;"></div><div class="b" style="left:0px;top:331px;width:24px;height:1px;background:#c6c6c6;"></div><div class="b" style="left:24px;top:331px;width:618px;height:1px;background:#d4d4d4;"></div><div class="b" style="left:0px;top:351px;width:24px;height:1px;background:#c6c6c6;"></div><div class="b" style="left:24px;top:351px;width:618px;height:1px;background:#d4d4d4;"></div><div class="b" style="left:0px;top:371px;width:24px;height:1px;background:#c6c6c6;"></div><div class="b" style="left:24px;top:371px;width:618px;height:1px;background:#d4d4d4;"></div><div class="b" style="left:0px;top:391px;width:24px;height:1px;background:#c6c6c6;"></div><div class="b" style="left:24px;top:391px;width:618px;height:1px;background:#d4d4d4;"></div><div class="b" style="left:0px;top:411px;width:24px;height:1px;background:#c6c6c6;"></div><div class="b" style="left:24px;top:411px;width:618px;height:1px;background:#d4d4d4;"></div><div class="b" style="left:0px;top:431px;width:24px;height:1px;background:#c6c6c6;"></div><div class="b" style="left:24px;top:431px;width:618px;height:1px;background:#d4d4d4;"></div><div class="b" style="left:0px;top:451px;width:24px;height:1px;background:#c6c6c6;"></div><div class="b" style="left:24px;top:451px;width:618px;height:1px;background:#d4d4d4;"></div><div class="b" style="left:0px;top:471px;width:24px;height:1px;background:#c6c6c6;"></div><div class="b" style="left:24px;top:471px;width:618px;height:1px;background:#d4d4d4;"></div><div class="b" style="left:0px;top:491px;width:24px;height:1px;background:#c6c6c6;"></div><div class="b" style="left:24px;top:491px;width:618px;height:1px;background:#d4d4d4;"></div><div class="b" style="left:0px;top:511px;width:24px;height:1px;background:#c6c6c6;"></div><div class="b" style="left:24px;top:511px;width:618px;height:1px;background:#d4d4d4;"></div><div class="b" style="left:0px;top:531px;width:24px;height:1px;background:#c6c6c6;"></div><div class="b" style="left:24px;top:531px;width:618px;height:1px;background:#d4d4d4;"></div><div class="b" style="left:0px;top:551px;width:24px;height:1px;background:#c6c6c6;"></div><div class="b" style="left:24px;top:551px;width:618px;height:1px;background:#d4d4d4;"></div><div class="b" style="left:0px;top:571px;width:24px;height:1px;background:#c6c6c6;"></div><div class="b" style="left:24px;top:571px;width:618px;height:1px;background:#d4d4d4;"></div><div class="b" style="left:0px;top:591px;width:24px;height:1px;background:#c6c6c6;"></div><div class="b" style="left:24px;top:591px;width:618px;height:1px;background:#d4d4d4;"></div><div class="b" style="left:0px;top:611px;width:24px;height:1px;background:#c6c6c6;"></div><div class="b" style="left:24px;top:611px;width:618px;height:1px;background:#d4d4d4;"></div><div class="b" style="left:0px;top:631px;width:24px;height:1px;background:#c6c6c6;"></div><div class="b" style="left:24px;top:631px;width:618px;height:1px;background:#d4d4d4;"></div><div class="b" style="left:0px;top:651px;width:24px;height:1px;background:#c6c6c6;"></div><div class="b" style="left:24px;top:651px;width:618px;height:1px;background:#d4d4d4;"></div><div class="b" style="left:0px;top:671px;width:24px;height:1px;background:#c6c6c6;"></div><div class="b" style="left:24px;top:671px;width:618px;height:1px;background:#d4d4d4;"></div><div class="b" style="left:0px;top:691px;width:24px;height:1px;background:#c6c6c6;"></div><div class="b" style="left:24px;top:691px;width:618px;height:1px;background:#d4d4d4;"></div><div class="b" style="left:0px;top:711px;width:24px;height:1px;background:#c6c6c6;"></div><div class="b" style="left:24px;top:711px;width:618px;height:1px;background:#d4d4d4;"></div><div class="b" style="left:0px;top:731px;width:24px;height:1px;background:#c6c6c6;"></div><div class="b" style="left:24px;top:731px;width:618px;height:1px;background:#d4d4d4;"></div><div class="b" style="left:0px;top:751px;width:24px;height:1px;background:#c6c6c6;"></div><div class="b" style="left:24px;top:751px;width:618px;height:1px;background:#d4d4d4;"></div><div class="b" style="left:0px;top:771px;width:24px;height:1px;background:#c6c6c6;"></div><div class="b" style="left:24px;top:771px;width:618px;height:1px;background:#d4d4d4;"></div><div class="b" style="left:0px;top:791px;width:24px;height:1px;background:#c6c6c6;"></div><div class="b" style="left:24px;top:791px;width:618px;height:1px;background:#d4d4d4;"></div><div class="b" style="left:0px;top:811px;width:24px;height:1px;background:#c6c6c6;"></div><div class="b" style="left:24px;top:811px;width:618px;height:1px;background:#d4d4d4;"></div><div class="b" style="left:0px;top:831px;width:24px;height:1px;background:#c6c6c6;"></div><div class="b" style="left:24px;top:831px;width:618px;height:1px;background:#d4d4d4;"></div><div class="b" style="left:0px;top:851px;width:24px;height:1px;background:#c6c6c6;"></div><div class="b" style="left:24px;top:851px;width:618px;height:1px;background:#d4d4d4;"></div><div class="b" style="left:0px;top:871px;width:24px;height:1px;background:#c6c6c6;"></div><div class="b" style="left:24px;top:871px;width:618px;height:1px;background:#d4d4d4;"></div><div class="b" style="left:0px;top:891px;width:24px;height:1px;background:#c6c6c6;"></div><div class="b" style="left:24px;top:891px;width:618px;height:1px;background:#d4d4d4;"></div><div class="b" style="left:164px;top:232px;width:1px;height:671px;background:#d4d4d4;"></div><div class="b" style="left:404px;top:232px;width:1px;height:671px;background:#d4d4d4;"></div><div class="b" style="left:506px;top:232px;width:1px;height:671px;background:#d4d4d4;"></div><div class="b" style="left:637px;top:232px;width:1px;height:671px;background:#d4d4d4;"></div><span class="t" style="left:12.60px;top:235.00px;font-size:13px;color:#444;transform:translateX(-50%);letter-spacing:-0.2px;">1</span><span class="t" style="left:12.60px;top:255.00px;font-size:13px;color:#444;transform:translateX(-50%);letter-spacing:-0.2px;">2</span><span class="t" style="left:12.60px;top:275.00px;font-size:13px;color:#217346;transform:translateX(-50%);letter-spacing:-0.2px;">3</span><span class="t" style="left:12.60px;top:295.00px;font-size:13px;color:#444;transform:translateX(-50%);letter-spacing:-0.2px;">4</span><span class="t" style="left:12.60px;top:315.00px;font-size:13px;color:#444;transform:translateX(-50%);letter-spacing:-0.2px;">5</span><span class="t" style="left:12.60px;top:335.00px;font-size:13px;color:#444;transform:translateX(-50%);letter-spacing:-0.2px;">6</span><span class="t" style="left:12.60px;top:355.00px;font-size:13px;color:#444;transform:translateX(-50%);letter-spacing:-0.2px;">7</span><span class="t" style="left:12.60px;top:375.00px;font-size:13px;color:#444;transform:translateX(-50%);letter-spacing:-0.2px;">8</span><span class="t" style="left:12.60px;top:395.00px;font-size:13px;color:#444;transform:translateX(-50%);letter-spacing:-0.2px;">9</span><span class="t" style="left:12.60px;top:415.00px;font-size:13px;color:#444;transform:translateX(-50%);letter-spacing:-0.2px;">10</span><span class="t" style="left:12.60px;top:435.00px;font-size:13px;color:#444;transform:translateX(-50%);letter-spacing:-0.2px;">11</span><span class="t" style="left:12.60px;top:455.00px;font-size:13px;color:#444;transform:translateX(-50%);letter-spacing:-0.2px;">12</span><span class="t" style="left:12.60px;top:475.00px;font-size:13px;color:#444;transform:translateX(-50%);letter-spacing:-0.2px;">13</span><span class="t" style="left:12.60px;top:495.00px;font-size:13px;color:#444;transform:translateX(-50%);letter-spacing:-0.2px;">14</span><span class="t" style="left:12.60px;top:515.00px;font-size:13px;color:#444;transform:translateX(-50%);letter-spacing:-0.2px;">15</span><span class="t" style="left:12.60px;top:535.00px;font-size:13px;color:#444;transform:translateX(-50%);letter-spacing:-0.2px;">16</span><span class="t" style="left:12.60px;top:555.00px;font-size:13px;color:#444;transform:translateX(-50%);letter-spacing:-0.2px;">17</span><span class="t" style="left:12.60px;top:575.00px;font-size:13px;color:#444;transform:translateX(-50%);letter-spacing:-0.2px;">18</span><span class="t" style="left:12.60px;top:595.00px;font-size:13px;color:#444;transform:translateX(-50%);letter-spacing:-0.2px;">19</span><span class="t" style="left:12.60px;top:615.00px;font-size:13px;color:#444;transform:translateX(-50%);letter-spacing:-0.2px;">20</span><span class="t" style="left:12.60px;top:635.00px;font-size:13px;color:#444;transform:translateX(-50%);letter-spacing:-0.2px;">21</span><span class="t" style="left:12.60px;top:655.00px;font-size:13px;color:#444;transform:translateX(-50%);letter-spacing:-0.2px;">22</span><span class="t" style="left:12.60px;top:675.00px;font-size:13px;color:#444;transform:translateX(-50%);letter-spacing:-0.2px;">23</span><span class="t" style="left:12.60px;top:695.00px;font-size:13px;color:#444;transform:translateX(-50%);letter-spacing:-0.2px;">24</span><span class="t" style="left:12.60px;top:715.00px;font-size:13px;color:#444;transform:translateX(-50%);letter-spacing:-0.2px;">25</span><span class="t" style="left:12.60px;top:735.00px;font-size:13px;color:#444;transform:translateX(-50%);letter-spacing:-0.2px;">26</span><span class="t" style="left:12.60px;top:755.00px;font-size:13px;color:#444;transform:translateX(-50%);letter-spacing:-0.2px;">27</span><span class="t" style="left:12.60px;top:775.00px;font-size:13px;color:#444;transform:translateX(-50%);letter-spacing:-0.2px;">28</span><span class="t" style="left:12.60px;top:795.00px;font-size:13px;color:#444;transform:translateX(-50%);letter-spacing:-0.2px;">29</span><span class="t" style="left:12.60px;top:815.00px;font-size:13px;color:#444;transform:translateX(-50%);letter-spacing:-0.2px;">30</span><span class="t" style="left:12.60px;top:835.00px;font-size:13px;color:#444;transform:translateX(-50%);letter-spacing:-0.2px;">31</span><span class="t" style="left:12.60px;top:855.00px;font-size:13px;color:#444;transform:translateX(-50%);letter-spacing:-0.2px;">32</span><span class="t" style="left:12.60px;top:875.00px;font-size:13px;color:#444;transform:translateX(-50%);letter-spacing:-0.2px;">33</span><span class="t" style="left:12.60px;top:895.00px;font-size:13px;color:#444;transform:translateX(-50%);letter-spacing:-0.2px;">34</span><div class="b" style="left:25px;top:232px;width:617px;height:19px;background:#dce6f1;"></div><div class="b" style="left:25px;top:252px;width:617px;height:19px;background:#dce6f1;"></div><div class="b" style="left:25px;top:272px;width:617px;height:19px;background:#fff2cc;"></div><div class="b" style="left:25px;top:292px;width:617px;height:19px;background:#fff2cc;"></div><div class="b" style="left:25px;top:312px;width:617px;height:19px;background:#fff2cc;"></div><div class="b" style="left:25px;top:332px;width:617px;height:19px;background:#fff2cc;"></div><div class="b" style="left:25px;top:352px;width:617px;height:19px;background:#fff2cc;"></div><div class="b" style="left:25px;top:372px;width:617px;height:19px;background:#fff2cc;"></div><div class="b" style="left:25px;top:392px;width:617px;height:19px;background:#fff2cc;"></div><div class="b" style="left:25px;top:412px;width:617px;height:19px;background:#fff2cc;"></div><div class="b" style="left:25px;top:432px;width:617px;height:19px;background:#fff2cc;"></div><div class="b" style="left:25px;top:452px;width:617px;height:19px;background:#fff2cc;"></div><div class="b" style="left:25px;top:472px;width:617px;height:19px;background:#ffd966;"></div><div class="b" style="left:25px;top:492px;width:617px;height:19px;background:#fff2cc;"></div><div class="b" style="left:25px;top:512px;width:617px;height:19px;background:#fff2cc;"></div><div class="b" style="left:25px;top:532px;width:617px;height:19px;background:#fff2cc;"></div><div class="b" style="left:25px;top:552px;width:617px;height:19px;background:#fff2cc;"></div><div class="b" style="left:25px;top:572px;width:617px;height:19px;background:#fff2cc;"></div><div class="b" style="left:25px;top:592px;width:617px;height:19px;background:#fff2cc;"></div><div class="b" style="left:25px;top:612px;width:617px;height:19px;background:#ffd966;"></div><div class="b" style="left:25px;top:632px;width:617px;height:19px;background:#a9d08e;"></div><div class="b" style="left:24px;top:251px;width:618px;height:1px;background:#3f4b5c;"></div><div class="b" style="left:24px;top:271px;width:618px;height:1px;background:#3f4b5c;"></div><div class="b" style="left:24px;top:291px;width:380px;height:1px;background:#3f4b5c;"></div><div class="b" style="left:24px;top:311px;width:380px;height:1px;background:#3f4b5c;"></div><div class="b" style="left:24px;top:331px;width:380px;height:1px;background:#3f4b5c;"></div><div class="b" style="left:24px;top:351px;width:380px;height:1px;background:#3f4b5c;"></div><div class="b" style="left:24px;top:371px;width:380px;height:1px;background:#3f4b5c;"></div><div class="b" style="left:24px;top:391px;width:380px;height:1px;background:#3f4b5c;"></div><div class="b" style="left:24px;top:411px;width:380px;height:1px;background:#3f4b5c;"></div><div class="b" style="left:24px;top:431px;width:380px;height:1px;background:#3f4b5c;"></div><div class="b" style="left:24px;top:451px;width:380px;height:1px;background:#3f4b5c;"></div><div class="b" style="left:24px;top:471px;width:380px;height:1px;background:#3f4b5c;"></div><div class="b" style="left:24px;top:491px;width:380px;height:1px;background:#3f4b5c;"></div><div class="b" style="left:24px;top:511px;width:380px;height:1px;background:#3f4b5c;"></div><div class="b" style="left:24px;top:531px;width:380px;height:1px;background:#3f4b5c;"></div><div class="b" style="left:24px;top:551px;width:380px;height:1px;background:#3f4b5c;"></div><div class="b" style="left:24px;top:571px;width:380px;height:1px;background:#3f4b5c;"></div><div class="b" style="left:24px;top:591px;width:380px;height:1px;background:#3f4b5c;"></div><div class="b" style="left:24px;top:611px;width:380px;height:1px;background:#3f4b5c;"></div><div class="b" style="left:24px;top:631px;width:380px;height:1px;background:#3f4b5c;"></div><div class="b" style="left:24px;top:651px;width:380px;height:1px;background:#3f4b5c;"></div><div class="b" style="left:164px;top:231px;width:478px;height:1px;background:#989898;"></div><div class="b" style="left:24px;top:651px;width:618px;height:1px;background:#3f4b5c;"></div><div class="b" style="left:164px;top:232px;width:1px;height:420px;background:#3f4b5c;"></div><div class="b" style="left:404px;top:232px;width:1px;height:420px;background:#3f4b5c;"></div><div class="b" style="left:506px;top:232px;width:1px;height:40px;background:#3f4b5c;"></div><div class="b" style="left:637px;top:232px;width:1px;height:40px;background:#3f4b5c;"></div><span class="t" style="left:26.78px;top:255.00px;font-size:13px;color:#1f4e9c;font-weight:700;letter-spacing:0.577px;">Commitment Item</span><span class="t" style="left:406.92px;top:236.00px;font-size:12px;color:#1f497d;letter-spacing:0.467px;">Budget</span><span class="t" style="left:508.72px;top:236.00px;font-size:12px;color:#1f497d;letter-spacing:0.652px;word-spacing:0.4px;">Commitment Amount</span><span class="t" style="left:497.02px;top:256.00px;font-size:12px;color:#1f497d;letter-spacing:0.393px;">$</span><span class="t" style="left:628.12px;top:256.00px;font-size:12px;color:#1f497d;letter-spacing:0.393px;">$</span><span class="t" style="left:639.00px;top:236.00px;font-size:12px;color:#1f497d;font-style:italic;width:3px;overflow:hidden;">A</span><span class="t" style="left:43.22px;top:276.00px;font-size:12px;color:#1a1a1a;letter-spacing:2.000px;">[+]</span><span class="t" style="left:66.52px;top:276.00px;font-size:12px;color:#1a1a1a;letter-spacing:0.344px;">1855410</span><span class="t" style="left:185.52px;top:276.00px;font-size:12px;color:#1a1a1a;letter-spacing:0.207px;">tion</span><svg class="b" style="left:25px;top:272px;" width="8" height="8" viewBox="0 0 8 8"><path d="M0 0 L6.8 0 L0 6.8 Z" fill="#118a1b"/></svg><span class="t" style="left:43.22px;top:296.00px;font-size:12px;color:#1a1a1a;letter-spacing:2.000px;">[+]</span><span class="t" style="left:66.52px;top:296.00px;font-size:12px;color:#1a1a1a;letter-spacing:0.344px;">1855420</span><span class="t" style="left:167.02px;top:296.00px;font-size:12px;color:#1a1a1a;letter-spacing:-0.069px;word-spacing:1.2px;">Fees</span><svg class="b" style="left:25px;top:292px;" width="8" height="8" viewBox="0 0 8 8"><path d="M0 0 L6.8 0 L0 6.8 Z" fill="#118a1b"/></svg><span class="t" style="left:43.22px;top:316.00px;font-size:12px;color:#1a1a1a;letter-spacing:2.000px;">[+]</span><span class="t" style="left:66.52px;top:316.00px;font-size:12px;color:#1a1a1a;letter-spacing:0.344px;">1855430</span><span class="t" style="left:167.02px;top:316.00px;font-size:12px;color:#1a1a1a;letter-spacing:0.392px;word-spacing:1.2px;">Governmental Sources</span><svg class="b" style="left:25px;top:312px;" width="8" height="8" viewBox="0 0 8 8"><path d="M0 0 L6.8 0 L0 6.8 Z" fill="#118a1b"/></svg><span class="t" style="left:43.22px;top:336.00px;font-size:12px;color:#1a1a1a;letter-spacing:2.000px;">[+]</span><span class="t" style="left:66.52px;top:336.00px;font-size:12px;color:#1a1a1a;letter-spacing:0.344px;">1855440</span><span class="t" style="left:167.02px;top:336.00px;font-size:12px;color:#1a1a1a;letter-spacing:0.327px;word-spacing:1.2px;">Private Sources</span><svg class="b" style="left:25px;top:332px;" width="8" height="8" viewBox="0 0 8 8"><path d="M0 0 L6.8 0 L0 6.8 Z" fill="#118a1b"/></svg><span class="t" style="left:43.22px;top:356.00px;font-size:12px;color:#1a1a1a;letter-spacing:2.000px;">[+]</span><span class="t" style="left:66.52px;top:356.00px;font-size:12px;color:#1a1a1a;letter-spacing:0.344px;">1855450</span><span class="t" style="left:167.02px;top:356.00px;font-size:12px;color:#1a1a1a;letter-spacing:0.153px;word-spacing:1.2px;">Gifts and Pledges</span><svg class="b" style="left:25px;top:352px;" width="8" height="8" viewBox="0 0 8 8"><path d="M0 0 L6.8 0 L0 6.8 Z" fill="#118a1b"/></svg><span class="t" style="left:43.22px;top:376.00px;font-size:12px;color:#1a1a1a;letter-spacing:2.000px;">[+]</span><span class="t" style="left:66.52px;top:376.00px;font-size:12px;color:#1a1a1a;letter-spacing:-0.115px;">1855450XFER</span><span class="t" style="left:167.02px;top:376.00px;font-size:12px;color:#1a1a1a;letter-spacing:0.244px;word-spacing:1.2px;">Transfer to Other Funds</span><span class="t" style="left:43.22px;top:396.00px;font-size:12px;color:#1a1a1a;letter-spacing:2.000px;">[+]</span><span class="t" style="left:66.52px;top:396.00px;font-size:12px;color:#1a1a1a;letter-spacing:0.344px;">1855460</span><span class="t" style="left:167.02px;top:396.00px;font-size:12px;color:#1a1a1a;letter-spacing:0.764px;word-spacing:1.2px;">Investment</span><svg class="b" style="left:25px;top:392px;" width="8" height="8" viewBox="0 0 8 8"><path d="M0 0 L6.8 0 L0 6.8 Z" fill="#118a1b"/></svg><span class="t" style="left:43.22px;top:416.00px;font-size:12px;color:#1a1a1a;letter-spacing:2.000px;">[+]</span><span class="t" style="left:66.52px;top:416.00px;font-size:12px;color:#1a1a1a;letter-spacing:0.188px;">1855470EX0035</span><span class="t" style="left:167.02px;top:416.00px;font-size:12px;color:#1a1a1a;letter-spacing:0.256px;word-spacing:1.2px;">Sales and Services Educational Activitie</span><span class="t" style="left:43.22px;top:436.00px;font-size:12px;color:#1a1a1a;letter-spacing:2.000px;">[+]</span><span class="t" style="left:66.52px;top:436.00px;font-size:12px;color:#1a1a1a;letter-spacing:0.348px;">1855470035</span><span class="t" style="left:167.02px;top:436.00px;font-size:12px;color:#1a1a1a;letter-spacing:0.444px;word-spacing:1.2px;">Central/Other Allocations</span><svg class="b" style="left:25px;top:432px;" width="8" height="8" viewBox="0 0 8 8"><path d="M0 0 L6.8 0 L0 6.8 Z" fill="#118a1b"/></svg><span class="t" style="left:43.22px;top:456.00px;font-size:12px;color:#1a1a1a;letter-spacing:2.000px;">[+]</span><span class="t" style="left:66.52px;top:456.00px;font-size:12px;color:#1a1a1a;letter-spacing:0.385px;">1855480-491</span><span class="t" style="left:167.02px;top:456.00px;font-size:12px;color:#1a1a1a;letter-spacing:0.307px;word-spacing:1.2px;">Other Revenue</span><span class="t" style="left:35.52px;top:476.00px;font-size:12px;color:#1a1a1a;letter-spacing:2.000px;">[-]</span><span class="t" style="left:54.22px;top:476.00px;font-size:12px;color:#1a1a1a;letter-spacing:0.016px;">1855ZCN_REV</span><span class="t" style="left:167.02px;top:476.00px;font-size:12px;color:#1a1a1a;letter-spacing:0.388px;word-spacing:1.2px;">Total Revenue</span><span class="t" style="left:43.22px;top:496.00px;font-size:12px;color:#1a1a1a;letter-spacing:2.000px;">[+]</span><span class="t" style="left:66.52px;top:496.00px;font-size:12px;color:#1a1a1a;letter-spacing:0.247px;">185551</span><span class="t" style="left:167.02px;top:496.00px;font-size:12px;color:#1a1a1a;letter-spacing:0.290px;word-spacing:1.2px;">Expense-Personnel</span><svg class="b" style="left:25px;top:492px;" width="8" height="8" viewBox="0 0 8 8"><path d="M0 0 L6.8 0 L0 6.8 Z" fill="#118a1b"/></svg><span class="t" style="left:43.22px;top:516.00px;font-size:12px;color:#1a1a1a;letter-spacing:2.000px;">[+]</span><span class="t" style="left:66.52px;top:516.00px;font-size:12px;color:#1a1a1a;letter-spacing:0.247px;">185552</span><span class="t" style="left:167.02px;top:516.00px;font-size:12px;color:#1a1a1a;letter-spacing:0.282px;word-spacing:1.2px;">Expense-Non-Personnel</span><svg class="b" style="left:25px;top:512px;" width="8" height="8" viewBox="0 0 8 8"><path d="M0 0 L6.8 0 L0 6.8 Z" fill="#118a1b"/></svg><span class="t" style="left:43.22px;top:536.00px;font-size:12px;color:#1a1a1a;letter-spacing:2.000px;">[+]</span><span class="t" style="left:66.52px;top:536.00px;font-size:12px;color:#1a1a1a;letter-spacing:0.247px;">185553</span><span class="t" style="left:167.02px;top:536.00px;font-size:12px;color:#1a1a1a;letter-spacing:0.334px;word-spacing:1.2px;">Expense-Capitalized</span><svg class="b" style="left:25px;top:532px;" width="8" height="8" viewBox="0 0 8 8"><path d="M0 0 L6.8 0 L0 6.8 Z" fill="#118a1b"/></svg><span class="t" style="left:43.22px;top:556.00px;font-size:12px;color:#1a1a1a;letter-spacing:2.000px;">[+]</span><span class="t" style="left:66.52px;top:556.00px;font-size:12px;color:#1a1a1a;letter-spacing:0.247px;">185554</span><span class="t" style="left:167.02px;top:556.00px;font-size:12px;color:#1a1a1a;letter-spacing:0.378px;word-spacing:1.2px;">Expense-Overhead</span><svg class="b" style="left:25px;top:552px;" width="8" height="8" viewBox="0 0 8 8"><path d="M0 0 L6.8 0 L0 6.8 Z" fill="#118a1b"/></svg><span class="t" style="left:43.22px;top:576.00px;font-size:12px;color:#1a1a1a;letter-spacing:2.000px;">[+]</span><span class="t" style="left:66.52px;top:576.00px;font-size:12px;color:#1a1a1a;letter-spacing:0.247px;">185555</span><span class="t" style="left:167.02px;top:576.00px;font-size:12px;color:#1a1a1a;letter-spacing:0.405px;word-spacing:1.2px;">Expense-Internal Allocations</span><svg class="b" style="left:25px;top:572px;" width="8" height="8" viewBox="0 0 8 8"><path d="M0 0 L6.8 0 L0 6.8 Z" fill="#118a1b"/></svg><span class="t" style="left:43.22px;top:596.00px;font-size:12px;color:#1a1a1a;letter-spacing:2.000px;">[+]</span><span class="t" style="left:66.52px;top:596.00px;font-size:12px;color:#1a1a1a;letter-spacing:0.247px;">185559</span><span class="t" style="left:167.02px;top:596.00px;font-size:12px;color:#1a1a1a;letter-spacing:0.395px;word-spacing:1.2px;">Expense-InterFund Transfers</span><svg class="b" style="left:25px;top:592px;" width="8" height="8" viewBox="0 0 8 8"><path d="M0 0 L6.8 0 L0 6.8 Z" fill="#118a1b"/></svg><span class="t" style="left:35.52px;top:616.00px;font-size:12px;color:#1a1a1a;letter-spacing:2.000px;">[-]</span><span class="t" style="left:54.22px;top:616.00px;font-size:12px;color:#1a1a1a;letter-spacing:0.013px;">1855ZCN_EXP</span><span class="t" style="left:167.02px;top:616.00px;font-size:12px;color:#1a1a1a;letter-spacing:0.332px;word-spacing:1.2px;">Total Expense</span><span class="t" style="left:26.82px;top:636.00px;font-size:12px;color:#1a1a1a;letter-spacing:2.000px;">[-]</span><span class="t" style="left:46.22px;top:636.00px;font-size:12px;color:#1a1a1a;letter-spacing:0.327px;">18551855</span><span class="t" style="left:167.02px;top:636.00px;font-size:12px;color:#1a1a1a;letter-spacing:0.402px;word-spacing:1.2px;">Net Income</span><svg class="b" style="left:25px;top:632px;" width="8" height="8" viewBox="0 0 8 8"><path d="M0 0 L6.8 0 L0 6.8 Z" fill="#118a1b"/></svg><div class="b" style="left:23px;top:270px;width:143px;height:23px;border:2px solid #217346;box-sizing:border-box;"></div><div class="b" style="left:162px;top:289px;width:5px;height:5px;background:#217346;border:1px solid #fff;box-sizing:content-box;left:161px;top:288px;"></div><div class="b" style="left:166px;top:272px;width:20px;height:20px;background:#fff;border:1px solid #d6d6d6;box-sizing:border-box;"></div><svg class="b" style="left:167.3px;top:273.6px;" width="16" height="16" viewBox="0 0 16 16"><path d="M8 1.4 L14.9 14.8 L1.1 14.8 Z" fill="#fbe0ae" stroke="#f0852a" stroke-width="1.4" stroke-linejoin="round"/><rect x="7.3" y="5.6" width="1.4" height="5" fill="#333"/><rect x="7.3" y="11.6" width="1.4" height="1.4" fill="#333"/></svg><div class="b" style="left:405px;top:272px;width:233px;height:379px;overflow:hidden;"><div style="position:absolute;left:-6px;top:-6px;width:250px;height:400px;background:#fdf0ca"></div><div style="position:absolute;left:0;top:0;width:240px;height:390px;filter:blur(3.4px)"><div style="position:absolute;left:-10px;top:199px;width:260px;height:21px;background:#ffd966"></div><div style="position:absolute;left:-10px;top:339px;width:260px;height:21px;background:#ffd966"></div><div style="position:absolute;left:-10px;top:359px;width:260px;height:30px;background:#a9d08e"></div><div style="position:absolute;left:31.7px;top:4px;width:67.0px;height:11px;background:repeating-linear-gradient(90deg,#9a9788 0 4.5px,transparent 4.5px 6.5px);opacity:.5"></div><div style="position:absolute;left:203.0px;top:4px;width:37.0px;height:11px;background:repeating-linear-gradient(90deg,#9a9788 0 4.5px,transparent 4.5px 6.5px);opacity:.5"></div><div style="position:absolute;left:69.0px;top:24px;width:29.7px;height:11px;background:repeating-linear-gradient(90deg,#9a9788 0 4.5px,transparent 4.5px 6.5px);opacity:.5"></div><div style="position:absolute;left:203.0px;top:24px;width:37.0px;height:11px;background:repeating-linear-gradient(90deg,#9a9788 0 4.5px,transparent 4.5px 6.5px);opacity:.5"></div><div style="position:absolute;left:14.0px;top:44px;width:84.7px;height:11px;background:repeating-linear-gradient(90deg,#9a9788 0 4.5px,transparent 4.5px 6.5px);opacity:.5"></div><div style="position:absolute;left:169.5px;top:44px;width:70.5px;height:11px;background:repeating-linear-gradient(90deg,#9a9788 0 4.5px,transparent 4.5px 6.5px);opacity:.5"></div><div style="position:absolute;left:51.6px;top:64px;width:47.1px;height:11px;background:repeating-linear-gradient(90deg,#9a9788 0 4.5px,transparent 4.5px 6.5px);opacity:.5"></div><div style="position:absolute;left:205.0px;top:64px;width:35.0px;height:11px;background:repeating-linear-gradient(90deg,#9a9788 0 4.5px,transparent 4.5px 6.5px);opacity:.5"></div><div style="position:absolute;left:22.0px;top:84px;width:76.7px;height:11px;background:repeating-linear-gradient(90deg,#9a9788 0 4.5px,transparent 4.5px 6.5px);opacity:.5"></div><div style="position:absolute;left:205.0px;top:84px;width:35.0px;height:11px;background:repeating-linear-gradient(90deg,#9a9788 0 4.5px,transparent 4.5px 6.5px);opacity:.5"></div><div style="position:absolute;left:49.0px;top:104px;width:49.7px;height:11px;background:repeating-linear-gradient(90deg,#9a9788 0 4.5px,transparent 4.5px 6.5px);opacity:.5"></div><div style="position:absolute;left:205.0px;top:104px;width:35.0px;height:11px;background:repeating-linear-gradient(90deg,#9a9788 0 4.5px,transparent 4.5px 6.5px);opacity:.5"></div><div style="position:absolute;left:48.0px;top:124px;width:50.7px;height:11px;background:repeating-linear-gradient(90deg,#9a9788 0 4.5px,transparent 4.5px 6.5px);opacity:.5"></div><div style="position:absolute;left:205.0px;top:124px;width:35.0px;height:11px;background:repeating-linear-gradient(90deg,#9a9788 0 4.5px,transparent 4.5px 6.5px);opacity:.5"></div><div style="position:absolute;left:14.0px;top:144px;width:84.7px;height:11px;background:repeating-linear-gradient(90deg,#9a9788 0 4.5px,transparent 4.5px 6.5px);opacity:.5"></div><div style="position:absolute;left:163.0px;top:144px;width:77.0px;height:11px;background:repeating-linear-gradient(90deg,#9a9788 0 4.5px,transparent 4.5px 6.5px);opacity:.5"></div><div style="position:absolute;left:14.0px;top:164px;width:84.7px;height:11px;background:repeating-linear-gradient(90deg,#9a9788 0 4.5px,transparent 4.5px 6.5px);opacity:.5"></div><div style="position:absolute;left:173.0px;top:164px;width:67.0px;height:11px;background:repeating-linear-gradient(90deg,#9a9788 0 4.5px,transparent 4.5px 6.5px);opacity:.5"></div><div style="position:absolute;left:24.0px;top:184px;width:74.7px;height:11px;background:repeating-linear-gradient(90deg,#9a9788 0 4.5px,transparent 4.5px 6.5px);opacity:.5"></div><div style="position:absolute;left:208.0px;top:184px;width:32.0px;height:11px;background:repeating-linear-gradient(90deg,#9a9788 0 4.5px,transparent 4.5px 6.5px);opacity:.5"></div><div style="position:absolute;left:7.0px;top:204px;width:91.7px;height:11px;background:repeating-linear-gradient(90deg,#a08a40 0 4.5px,transparent 4.5px 6.5px);opacity:.5"></div><div style="position:absolute;left:163.0px;top:204px;width:77.0px;height:11px;background:repeating-linear-gradient(90deg,#a08a40 0 4.5px,transparent 4.5px 6.5px);opacity:.5"></div><div style="position:absolute;left:15.6px;top:224px;width:83.1px;height:11px;background:repeating-linear-gradient(90deg,#9a9788 0 4.5px,transparent 4.5px 6.5px);opacity:.5"></div><div style="position:absolute;left:147.0px;top:224px;width:93.0px;height:11px;background:repeating-linear-gradient(90deg,#9a9788 0 4.5px,transparent 4.5px 6.5px);opacity:.5"></div><div style="position:absolute;left:15.0px;top:244px;width:83.7px;height:11px;background:repeating-linear-gradient(90deg,#9a9788 0 4.5px,transparent 4.5px 6.5px);opacity:.5"></div><div style="position:absolute;left:147.0px;top:244px;width:93.0px;height:11px;background:repeating-linear-gradient(90deg,#9a9788 0 4.5px,transparent 4.5px 6.5px);opacity:.5"></div><div style="position:absolute;left:35.0px;top:264px;width:63.7px;height:11px;background:repeating-linear-gradient(90deg,#9a9788 0 4.5px,transparent 4.5px 6.5px);opacity:.5"></div><div style="position:absolute;left:167.0px;top:264px;width:73.0px;height:11px;background:repeating-linear-gradient(90deg,#9a9788 0 4.5px,transparent 4.5px 6.5px);opacity:.5"></div><div style="position:absolute;left:24.0px;top:284px;width:74.7px;height:11px;background:repeating-linear-gradient(90deg,#9a9788 0 4.5px,transparent 4.5px 6.5px);opacity:.5"></div><div style="position:absolute;left:154.6px;top:284px;width:85.4px;height:11px;background:repeating-linear-gradient(90deg,#9a9788 0 4.5px,transparent 4.5px 6.5px);opacity:.5"></div><div style="position:absolute;left:74.0px;top:304px;width:24.7px;height:11px;background:repeating-linear-gradient(90deg,#9a9788 0 4.5px,transparent 4.5px 6.5px);opacity:.5"></div><div style="position:absolute;left:182.0px;top:304px;width:58.0px;height:11px;background:repeating-linear-gradient(90deg,#9a9788 0 4.5px,transparent 4.5px 6.5px);opacity:.5"></div><div style="position:absolute;left:48.0px;top:324px;width:50.7px;height:11px;background:repeating-linear-gradient(90deg,#9a9788 0 4.5px,transparent 4.5px 6.5px);opacity:.5"></div><div style="position:absolute;left:205.5px;top:324px;width:34.5px;height:11px;background:repeating-linear-gradient(90deg,#9a9788 0 4.5px,transparent 4.5px 6.5px);opacity:.5"></div><div style="position:absolute;left:9.0px;top:344px;width:89.7px;height:11px;background:repeating-linear-gradient(90deg,#a08a40 0 4.5px,transparent 4.5px 6.5px);opacity:.5"></div><div style="position:absolute;left:148.0px;top:344px;width:92.0px;height:11px;background:repeating-linear-gradient(90deg,#a08a40 0 4.5px,transparent 4.5px 6.5px);opacity:.5"></div><div style="position:absolute;left:17.0px;top:364px;width:81.7px;height:11px;background:repeating-linear-gradient(90deg,#6f9464 0 4.5px,transparent 4.5px 6.5px);opacity:.5"></div><div style="position:absolute;left:148.0px;top:364px;width:92.0px;height:11px;background:repeating-linear-gradient(90deg,#6f9464 0 4.5px,transparent 4.5px 6.5px);opacity:.5"></div></div></div><div class="b" style="left:24px;top:651px;width:618px;height:1px;background:#3f4b5c;"></div><div class="b" style="left:405px;top:291px;width:5px;height:1px;background:#8e9ab0;"></div><div class="b" style="left:638px;top:291px;width:4px;height:1px;background:#9aa6c8;"></div><div class="b" style="left:405px;top:311px;width:5px;height:1px;background:#8e9ab0;"></div><div class="b" style="left:638px;top:311px;width:4px;height:1px;background:#9aa6c8;"></div><div class="b" style="left:405px;top:331px;width:5px;height:1px;background:#8e9ab0;"></div><div class="b" style="left:638px;top:331px;width:4px;height:1px;background:#9aa6c8;"></div><div class="b" style="left:405px;top:351px;width:5px;height:1px;background:#8e9ab0;"></div><div class="b" style="left:638px;top:351px;width:4px;height:1px;background:#9aa6c8;"></div><div class="b" style="left:405px;top:371px;width:5px;height:1px;background:#8e9ab0;"></div><div class="b" style="left:638px;top:371px;width:4px;height:1px;background:#9aa6c8;"></div><div class="b" style="left:405px;top:391px;width:5px;height:1px;background:#8e9ab0;"></div><div class="b" style="left:638px;top:391px;width:4px;height:1px;background:#9aa6c8;"></div><div class="b" style="left:405px;top:411px;width:5px;height:1px;background:#8e9ab0;"></div><div class="b" style="left:638px;top:411px;width:4px;height:1px;background:#9aa6c8;"></div><div class="b" style="left:405px;top:431px;width:5px;height:1px;background:#8e9ab0;"></div><div class="b" style="left:638px;top:431px;width:4px;height:1px;background:#9aa6c8;"></div><div class="b" style="left:405px;top:451px;width:5px;height:1px;background:#8e9ab0;"></div><div class="b" style="left:638px;top:451px;width:4px;height:1px;background:#9aa6c8;"></div><div class="b" style="left:405px;top:471px;width:5px;height:1px;background:#8e9ab0;"></div><div class="b" style="left:638px;top:471px;width:4px;height:1px;background:#9aa6c8;"></div><div class="b" style="left:405px;top:491px;width:5px;height:1px;background:#8e9ab0;"></div><div class="b" style="left:638px;top:491px;width:4px;height:1px;background:#9aa6c8;"></div><div class="b" style="left:405px;top:511px;width:5px;height:1px;background:#8e9ab0;"></div><div class="b" style="left:638px;top:511px;width:4px;height:1px;background:#9aa6c8;"></div><div class="b" style="left:405px;top:531px;width:5px;height:1px;background:#8e9ab0;"></div><div class="b" style="left:638px;top:531px;width:4px;height:1px;background:#9aa6c8;"></div><div class="b" style="left:405px;top:551px;width:5px;height:1px;background:#8e9ab0;"></div><div class="b" style="left:638px;top:551px;width:4px;height:1px;background:#9aa6c8;"></div><div class="b" style="left:405px;top:571px;width:5px;height:1px;background:#8e9ab0;"></div><div class="b" style="left:638px;top:571px;width:4px;height:1px;background:#9aa6c8;"></div><div class="b" style="left:405px;top:591px;width:5px;height:1px;background:#8e9ab0;"></div><div class="b" style="left:638px;top:591px;width:4px;height:1px;background:#9aa6c8;"></div><div class="b" style="left:405px;top:611px;width:5px;height:1px;background:#8e9ab0;"></div><div class="b" style="left:638px;top:611px;width:4px;height:1px;background:#9aa6c8;"></div><div class="b" style="left:405px;top:631px;width:5px;height:1px;background:#8e9ab0;"></div><div class="b" style="left:638px;top:631px;width:4px;height:1px;background:#9aa6c8;"></div><div class="b" style="left:642px;top:212px;width:26px;height:691px;background:#e6e6e6;"></div><div class="b" style="left:643px;top:232px;width:1px;height:671px;background:#c8c8c8;"></div><div class="b" style="left:646px;top:214px;width:16px;height:689px;background:#f0f0f0;"></div><div class="b" style="left:646px;top:214px;width:15px;height:15px;background:#fff;border:1px solid #ababab;box-sizing:border-box;"></div><svg class="b" style="left:649px;top:218px;" width="9" height="7" viewBox="0 0 9 7"><path d="M0.5 6 L4.5 1.5 L8.5 6 Z" fill="#222"/></svg><div class="b" style="left:646px;top:229px;width:15px;height:637px;background:#fff;border:1px solid #ababab;box-sizing:border-box;"></div><div class="b" style="left:646px;top:888px;width:15px;height:15px;background:#fff;border:1px solid #ababab;box-sizing:border-box;"></div><svg class="b" style="left:649px;top:892px;" width="9" height="7" viewBox="0 0 9 7"><path d="M0.5 1 L4.5 5.5 L8.5 1 Z" fill="#222"/></svg><div class="b" style="left:664px;top:212px;width:1px;height:717px;background:#efefef;"></div><div class="b" style="left:0px;top:902px;width:663px;height:29px;background:#e6e6e6;"></div><div class="b" style="left:0px;top:902px;width:314px;height:1px;background:#9b9b9b;"></div><div class="b" style="left:449px;top:902px;width:196px;height:1px;background:#9b9b9b;"></div><svg class="b" style="left:25px;top:911px;" width="6" height="10" viewBox="0 0 6 10"><path d="M5 0.5 L5 9.5 L0.8 5 Z" fill="#c3c3c3"/></svg><svg class="b" style="left:54px;top:911px;" width="6" height="10" viewBox="0 0 6 10"><path d="M1 0.5 L1 9.5 L5.2 5 Z" fill="#217346"/></svg><div class="b" style="left:99px;top:906px;width:1px;height:20px;background:#ababab;"></div><span class="t" style="left:114.88px;top:908.00px;font-size:13px;color:#444;letter-spacing:0.084px;">Report Filters and Data Update</span><div class="b" style="left:314px;top:902px;width:135px;height:24.5px;background:#fff;border-bottom:2px solid #217346;box-sizing:border-box;border-left:1px solid #9b9b9b;"></div><span class="t" style="left:325.48px;top:908.00px;font-size:13px;color:#217346;font-weight:700;letter-spacing:0.018px;">FM Budget v Actual</span><span class="t" style="left:457.48px;top:908.00px;font-size:13px;color:#217346;font-weight:700;letter-spacing:0.663px;">...</span><svg class="b" style="left:481px;top:907px;" width="18" height="18" viewBox="0 0 18 18"><circle cx="9" cy="9" r="7.5" fill="none" stroke="#7a7a7a" stroke-width="1.1"/><path d="M9 5 V13 M5 9 H13" stroke="#7a7a7a" stroke-width="1.6"/></svg><svg class="b" style="left:518px;top:909px;" width="3" height="14" viewBox="0 0 3 14"><rect x="1" y="1" width="1" height="1.5" fill="#aaa"/><rect x="1" y="6" width="1" height="1.5" fill="#aaa"/><rect x="1" y="11" width="1" height="1.5" fill="#aaa"/></svg><div class="b" style="left:535px;top:909px;width:108px;height:15px;background:#f0f0f0;"></div><div class="b" style="left:535px;top:909px;width:15px;height:15px;background:#fff;border:1px solid #ababab;box-sizing:border-box;"></div><svg class="b" style="left:539px;top:912px;" width="7" height="9" viewBox="0 0 7 9"><path d="M6 0.5 L6 8.5 L1.5 4.5 Z" fill="#222"/></svg><div class="b" style="left:549px;top:909px;width:39px;height:15px;background:#fff;border:1px solid #ababab;box-sizing:border-box;"></div><div class="b" style="left:628px;top:909px;width:15px;height:15px;background:#fff;border:1px solid #ababab;box-sizing:border-box;"></div><svg class="b" style="left:632px;top:912px;" width="7" height="9" viewBox="0 0 7 9"><path d="M1 0.5 L1 8.5 L5.5 4.5 Z" fill="#222"/></svg><div class="b" style="left:0px;top:930px;width:1370px;height:13px;background:#f3f2f1;border-top:1px solid #e1dfdd;box-sizing:border-box;"></div><span class="t" style="left:5.54px;top:936.00px;font-size:11.5px;color:#444;letter-spacing:-0.304px;">Ready</span><span class="t" style="left:72.54px;top:936.00px;font-size:11.5px;color:#444;letter-spacing:0.088px;">Accessibility: Good to go</span><svg class="b" style="left:55px;top:932px;" width="16" height="12" viewBox="0 0 16 12"><circle cx="8" cy="3.5" r="2" fill="none" stroke="#444" stroke-width="1"/><path d="M2.5 6.5 C5 5.5 11 5.5 13.5 6.5 M8 6 V12 M6 8 L6 12 M10 8 L10 12" stroke="#444" stroke-width="1" fill="none"/></svg><div class="b" style="left:1068px;top:930px;width:40px;height:13px;background:#d0d0d0;"></div><svg class="b" style="left:1081px;top:934px;" width="14" height="10" viewBox="0 0 14 10"><path d="M0.5 0.5 H13.5 V9.5 H0.5 Z M5 0.5 V10 M9.5 0.5 V10 M0.5 5 H13.5" fill="none" stroke="#333" stroke-width="1.2"/></svg><svg class="b" style="left:1121px;top:934px;" width="14" height="10" viewBox="0 0 14 10"><path d="M0.5 0.5 H13.5 V10 M0.5 0.5 V10 M3.5 3.5 H10.5 V10 M3.5 3.5 V10 M5.5 6 H8.5 M5.5 8 H8.5" fill="none" stroke="#444" stroke-width="1.1"/></svg><svg class="b" style="left:1161px;top:934px;" width="14" height="10" viewBox="0 0 14 10"><path d="M0.5 0.5 H13.5 V10 M0.5 0.5 V10 M4 0.5 V7 H10 V0.5" fill="none" stroke="#444" stroke-width="1.1"/></svg><div class="b" style="left:1195px;top:940px;width:7px;height:1px;background:#444;"></div><div class="b" style="left:1207px;top:940px;width:100px;height:1px;background:#666;"></div><div class="b" style="left:1255px;top:935px;width:4px;height:9px;background:#333;"></div><div class="b" style="left:1312px;top:940px;width:8px;height:1px;background:#444;"></div><div class="b" style="left:1315.5px;top:937px;width:1px;height:7px;background:#444;"></div><span class="t" style="left:1332.54px;top:936.00px;font-size:11.5px;color:#444;letter-spacing:-0.462px;">100%</span><div class="b" style="left:665px;top:212px;width:705px;height:717px;background:#e6e6e6;"></div><div class="b" style="left:672px;top:253px;width:698px;height:642px;background:#fff;"></div><div class="b" style="left:672px;top:894px;width:698px;height:29px;background:#f5f5f5;"></div><span class="t" style="left:678.20px;top:228.00px;font-size:20px;color:#4a4a4a;letter-spacing:-0.126px;">Analysis</span><svg class="b" style="left:1315px;top:231px;" width="16" height="9" viewBox="0 0 16 9"><path d="M1.5 1.5 L8 7.5 L14.5 1.5" stroke="#333" stroke-width="1.2" fill="none"/></svg><svg class="b" style="left:1348px;top:229px;" width="13" height="13" viewBox="0 0 13 13"><path d="M1.5 1.5 L11.5 11.5 M11.5 1.5 L1.5 11.5" stroke="#333" stroke-width="1.2" fill="none"/></svg><span class="t" style="left:678.96px;top:261.00px;font-size:11px;color:#161620;letter-spacing:0.162px;">View for:</span><div class="b" style="left:731px;top:257px;width:635px;height:21px;background:#fff;border:1px solid #ababab;box-sizing:border-box;"></div><span class="t" style="left:736.96px;top:261.60px;font-size:11px;color:#161620;letter-spacing:-0.266px;">FM Fund for AO</span><svg class="b" style="left:1351px;top:265.7px;" width="10" height="7" viewBox="0 0 10 7"><path d="M1 1 L5 5 L9 1" stroke="#444" stroke-width="1" fill="none"/></svg><span class="t" style="left:678.96px;top:289.50px;font-size:11px;color:#161620;letter-spacing:-0.120px;">Find:</span><div class="b" style="left:731px;top:284px;width:635px;height:24px;background:#fff;border:1px solid #ababab;box-sizing:border-box;"></div><svg class="b" style="left:1346px;top:289px;" width="15" height="15" viewBox="0 0 15 15"><path d="M1.5 13.5 L6.5 8.5" stroke="#e8912d" stroke-width="2.2" stroke-linecap="round"/><circle cx="9.7" cy="5.3" r="4.4" fill="#dcecfb" stroke="#7fa6de" stroke-width="1.1"/></svg><svg class="b" style="left:679px;top:317px;" width="15" height="15" viewBox="0 0 15 15"><path d="M7.5 0.8 L14 4 L14 11 L7.5 14.3 L1 11 L1 4 Z" fill="#8a8a8a"/><path d="M1 4 L7.5 7.3 L14 4 M7.5 7.3 V14.3" stroke="#fff" stroke-width="1" fill="none"/></svg><span class="t" style="left:703.06px;top:318.90px;font-size:11px;color:#161620;">Data Source</span><div class="b" style="left:677px;top:340px;width:341px;height:553px;background:#fff;border:1px solid #c3c3c3;box-sizing:border-box;"></div><div class="b" style="left:700px;top:342px;width:181px;height:21px;background:#eeeeee;"></div><svg class="b" style="left:680px;top:345px;" width="17" height="15" viewBox="0 0 17 15"><rect x="4.5" y="1.5" width="11" height="11" fill="#fff" stroke="#6d8fc7" stroke-width="1"/><rect x="4.5" y="1.5" width="11" height="3" fill="#6d8fc7"/><path d="M7 7 H14 M7 9.5 H14" stroke="#9db7de" stroke-width="1"/><path d="M5 7.5 L9.5 9.5 L9.5 14 L5 15 L0.8 13 L0.8 9 Z" fill="#f08a24"/><path d="M0.8 9 L5 10.7 L9.5 9.5 M5 10.7 V15" stroke="#fbd3a6" stroke-width="0.8" fill="none"/></svg><span class="t" style="left:701.96px;top:345.20px;font-size:11px;color:#161620;letter-spacing:-0.075px;">[V_ZPUC06_Q001] FM Fund for AO</span><svg class="b" style="left:685px;top:367.0px;" width="9" height="9" viewBox="0 0 9 9"><rect x="0.5" y="0.5" width="8" height="8" fill="#fff" stroke="#7a7a7a" stroke-width="1"/><path d="M2 4.5 H7 M4.5 2 V7" stroke="#222" stroke-width="1"/></svg><span class="t" style="left:701.06px;top:365.50px;font-size:11px;color:#161620;letter-spacing:0.070px;">Measures</span><svg class="b" style="left:685px;top:385.0px;" width="9" height="9" viewBox="0 0 9 9"><rect x="0.5" y="0.5" width="8" height="8" fill="#fff" stroke="#7a7a7a" stroke-width="1"/><path d="M2 4.5 H7 M4.5 2 V7" stroke="#222" stroke-width="1"/></svg><span class="t" style="left:701.06px;top:383.50px;font-size:11px;color:#161620;letter-spacing:-0.276px;">[ZPUBUDTYP] Budget Type</span><svg class="b" style="left:685px;top:403.0px;" width="9" height="9" viewBox="0 0 9 9"><rect x="0.5" y="0.5" width="8" height="8" fill="#fff" stroke="#7a7a7a" stroke-width="1"/><path d="M2 4.5 H7 M4.5 2 V7" stroke="#222" stroke-width="1"/></svg><span class="t" style="left:701.06px;top:401.50px;font-size:11px;color:#161620;letter-spacing:-0.287px;">[ZBUSAREA] Business Area</span><svg class="b" style="left:685px;top:421.0px;" width="9" height="9" viewBox="0 0 9 9"><rect x="0.5" y="0.5" width="8" height="8" fill="#fff" stroke="#7a7a7a" stroke-width="1"/><path d="M2 4.5 H7 M4.5 2 V7" stroke="#222" stroke-width="1"/></svg><span class="t" style="left:701.02px;top:418.50px;font-size:12px;color:#111;font-weight:700;letter-spacing:-0.126px;">[0CMMT_ITEM] Commitment Item</span><svg class="b" style="left:685px;top:439.0px;" width="9" height="9" viewBox="0 0 9 9"><rect x="0.5" y="0.5" width="8" height="8" fill="#fff" stroke="#7a7a7a" stroke-width="1"/><path d="M2 4.5 H7 M4.5 2 V7" stroke="#222" stroke-width="1"/></svg><span class="t" style="left:701.06px;top:437.50px;font-size:11px;color:#161620;letter-spacing:-0.017px;">[ZDEPTMNT] Department</span><svg class="b" style="left:685px;top:457.0px;" width="9" height="9" viewBox="0 0 9 9"><rect x="0.5" y="0.5" width="8" height="8" fill="#fff" stroke="#7a7a7a" stroke-width="1"/><path d="M2 4.5 H7 M4.5 2 V7" stroke="#222" stroke-width="1"/></svg><span class="t" style="left:701.06px;top:455.50px;font-size:11px;color:#161620;letter-spacing:-0.315px;">[ZFISCPER] Fiscal Period</span><svg class="b" style="left:685px;top:475.0px;" width="9" height="9" viewBox="0 0 9 9"><rect x="0.5" y="0.5" width="8" height="8" fill="#fff" stroke="#7a7a7a" stroke-width="1"/><path d="M2 4.5 H7 M4.5 2 V7" stroke="#222" stroke-width="1"/></svg><span class="t" style="left:701.02px;top:472.50px;font-size:12px;color:#111;font-weight:700;letter-spacing:0.102px;">[ZFISCYEAR] Fiscal Year</span><svg class="b" style="left:685px;top:493.0px;" width="9" height="9" viewBox="0 0 9 9"><rect x="0.5" y="0.5" width="8" height="8" fill="#fff" stroke="#7a7a7a" stroke-width="1"/><path d="M2 4.5 H7 M4.5 2 V7" stroke="#222" stroke-width="1"/></svg><span class="t" style="left:701.06px;top:491.50px;font-size:11px;color:#161620;letter-spacing:-0.211px;">[0FISCVARNT] Fiscal Year Variant</span><svg class="b" style="left:685px;top:511.0px;" width="9" height="9" viewBox="0 0 9 9"><rect x="0.5" y="0.5" width="8" height="8" fill="#fff" stroke="#7a7a7a" stroke-width="1"/><path d="M2 4.5 H7 M4.5 2 V7" stroke="#222" stroke-width="1"/></svg><span class="t" style="left:701.06px;top:509.50px;font-size:11px;color:#161620;letter-spacing:-0.213px;">[0FM_AREA] FM Area</span><svg class="b" style="left:685px;top:529.0px;" width="9" height="9" viewBox="0 0 9 9"><rect x="0.5" y="0.5" width="8" height="8" fill="#fff" stroke="#7a7a7a" stroke-width="1"/><path d="M2 4.5 H7 M4.5 2 V7" stroke="#222" stroke-width="1"/></svg><span class="t" style="left:701.06px;top:527.50px;font-size:11px;color:#161620;letter-spacing:-0.258px;">[ZFISCPERF] From Fiscal Period</span><svg class="b" style="left:685px;top:547.0px;" width="9" height="9" viewBox="0 0 9 9"><rect x="0.5" y="0.5" width="8" height="8" fill="#fff" stroke="#7a7a7a" stroke-width="1"/><path d="M2 4.5 H7 M4.5 2 V7" stroke="#222" stroke-width="1"/></svg><span class="t" style="left:701.06px;top:545.50px;font-size:11px;color:#161620;letter-spacing:-0.411px;">[ZFISCYR_F] From Fiscal Year</span><svg class="b" style="left:685px;top:565.0px;" width="9" height="9" viewBox="0 0 9 9"><rect x="0.5" y="0.5" width="8" height="8" fill="#fff" stroke="#7a7a7a" stroke-width="1"/><path d="M2 4.5 H7 M4.5 2 V7" stroke="#222" stroke-width="1"/></svg><span class="t" style="left:701.02px;top:562.50px;font-size:12px;color:#111;font-weight:700;letter-spacing:-0.027px;">[0FUNC_AREA] Functional area</span><svg class="b" style="left:685px;top:583.0px;" width="9" height="9" viewBox="0 0 9 9"><rect x="0.5" y="0.5" width="8" height="8" fill="#fff" stroke="#7a7a7a" stroke-width="1"/><path d="M2 4.5 H7 M4.5 2 V7" stroke="#222" stroke-width="1"/></svg><span class="t" style="left:701.02px;top:580.50px;font-size:12px;color:#111;font-weight:700;letter-spacing:0.066px;">[0FUND] Fund</span><svg class="b" style="left:685px;top:601.0px;" width="9" height="9" viewBox="0 0 9 9"><rect x="0.5" y="0.5" width="8" height="8" fill="#fff" stroke="#7a7a7a" stroke-width="1"/><path d="M2 4.5 H7 M4.5 2 V7" stroke="#222" stroke-width="1"/></svg><span class="t" style="left:701.06px;top:599.50px;font-size:11px;color:#161620;letter-spacing:-0.263px;">[0FUNDTYPE] Fund Type</span><svg class="b" style="left:685px;top:619.0px;" width="9" height="9" viewBox="0 0 9 9"><rect x="0.5" y="0.5" width="8" height="8" fill="#fff" stroke="#7a7a7a" stroke-width="1"/><path d="M2 4.5 H7 M4.5 2 V7" stroke="#222" stroke-width="1"/></svg><span class="t" style="left:701.02px;top:616.50px;font-size:12px;color:#111;font-weight:700;letter-spacing:-0.091px;">[ZPU_MEASU] Funded Program</span><svg class="b" style="left:685px;top:637.0px;" width="9" height="9" viewBox="0 0 9 9"><rect x="0.5" y="0.5" width="8" height="8" fill="#fff" stroke="#7a7a7a" stroke-width="1"/><path d="M2 4.5 H7 M4.5 2 V7" stroke="#222" stroke-width="1"/></svg><span class="t" style="left:701.02px;top:634.50px;font-size:12px;color:#111;font-weight:700;letter-spacing:0.036px;">[0FUNDS_CTR] Funds Center</span><svg class="b" style="left:685px;top:655.0px;" width="9" height="9" viewBox="0 0 9 9"><rect x="0.5" y="0.5" width="8" height="8" fill="#fff" stroke="#7a7a7a" stroke-width="1"/><path d="M2 4.5 H7 M4.5 2 V7" stroke="#222" stroke-width="1"/></svg><span class="t" style="left:701.06px;top:653.50px;font-size:11px;color:#161620;letter-spacing:-0.030px;">[ZREVEXP] Generated Column for</span><svg class="b" style="left:685px;top:673.0px;" width="9" height="9" viewBox="0 0 9 9"><rect x="0.5" y="0.5" width="8" height="8" fill="#fff" stroke="#7a7a7a" stroke-width="1"/><path d="M2 4.5 H7 M4.5 2 V7" stroke="#222" stroke-width="1"/></svg><span class="t" style="left:701.06px;top:671.50px;font-size:11px;color:#161620;letter-spacing:0.063px;">[0INFOPROV] InfoProvider</span><svg class="b" style="left:685px;top:691.0px;" width="9" height="9" viewBox="0 0 9 9"><rect x="0.5" y="0.5" width="8" height="8" fill="#fff" stroke="#7a7a7a" stroke-width="1"/><path d="M2 4.5 H7 M4.5 2 V7" stroke="#222" stroke-width="1"/></svg><span class="t" style="left:701.06px;top:689.50px;font-size:11px;color:#161620;letter-spacing:-0.299px;">[ZNETASCL] Net Asset Class</span><svg class="b" style="left:685px;top:709.0px;" width="9" height="9" viewBox="0 0 9 9"><rect x="0.5" y="0.5" width="8" height="8" fill="#fff" stroke="#7a7a7a" stroke-width="1"/><path d="M2 4.5 H7 M4.5 2 V7" stroke="#222" stroke-width="1"/></svg><span class="t" style="left:701.06px;top:707.50px;font-size:11px;color:#161620;letter-spacing:-0.293px;">[0REQTSN] Request TSN</span><svg class="b" style="left:685px;top:727.0px;" width="9" height="9" viewBox="0 0 9 9"><rect x="0.5" y="0.5" width="8" height="8" fill="#fff" stroke="#7a7a7a" stroke-width="1"/><path d="M2 4.5 H7 M4.5 2 V7" stroke="#222" stroke-width="1"/></svg><span class="t" style="left:701.06px;top:725.50px;font-size:11px;color:#161620;letter-spacing:-0.179px;">[ZFISCPERT] To Fiscal period</span><svg class="b" style="left:685px;top:745.0px;" width="9" height="9" viewBox="0 0 9 9"><rect x="0.5" y="0.5" width="8" height="8" fill="#fff" stroke="#7a7a7a" stroke-width="1"/><path d="M2 4.5 H7 M4.5 2 V7" stroke="#222" stroke-width="1"/></svg><span class="t" style="left:701.06px;top:743.50px;font-size:11px;color:#161620;letter-spacing:-0.447px;">[ZFISCYR_T] To Fiscal Year</span><svg class="b" style="left:1025px;top:319px;" width="13" height="12" viewBox="0 0 13 12"><rect x="0.5" y="0.5" width="3" height="11" fill="#fff" stroke="#777" stroke-width="1"/><rect x="4.7" y="0.5" width="3" height="11" fill="#fff" stroke="#777" stroke-width="1"/><rect x="8.9" y="0.5" width="3" height="11" fill="#fff" stroke="#777" stroke-width="1"/></svg><span class="t" style="left:1047.56px;top:318.90px;font-size:11px;color:#161620;letter-spacing:0.197px;">Columns</span><div class="b" style="left:1022px;top:340px;width:344px;height:139px;background:#fff;border:1px solid #c3c3c3;box-sizing:border-box;"></div><svg class="b" style="left:1025.7px;top:345.5px;" width="9" height="9" viewBox="0 0 9 9"><rect x="0.5" y="0.5" width="8" height="8" fill="#fff" stroke="#7a7a7a" stroke-width="1"/><path d="M2 4.5 H7" stroke="#222" stroke-width="1"/></svg><div class="b" style="left:1035px;top:350px;width:4px;height:1px;border-top:1px dotted #888;"></div><span class="t" style="left:1041.96px;top:343.80px;font-size:11px;color:#161620;letter-spacing:0.156px;">Measures</span><svg class="b" style="left:1100px;top:345px;" width="14" height="11" viewBox="0 0 14 11"><path d="M0.8 0.8 H13.2 L8.3 5.8 V10 H5.7 V5.8 Z" fill="#f5d800" stroke="#8a7a00" stroke-width="1" stroke-linejoin="round"/></svg><div class="b" style="left:1049px;top:358px;width:1px;height:83px;border-left:1px dotted #888;"></div><div class="b" style="left:1050px;top:367.5px;width:8px;height:1px;border-top:1px dotted #888;"></div><span class="t" style="left:1060.56px;top:361.80px;font-size:11px;color:#161620;letter-spacing:0.483px;">Budget</span><div class="b" style="left:1050px;top:385.5px;width:8px;height:1px;border-top:1px dotted #888;"></div><span class="t" style="left:1060.56px;top:379.80px;font-size:11px;color:#161620;letter-spacing:0.443px;">Commitment Amount</span><div class="b" style="left:1050px;top:403.5px;width:8px;height:1px;border-top:1px dotted #888;"></div><span class="t" style="left:1060.56px;top:397.80px;font-size:11px;color:#161620;letter-spacing:0.471px;">Actual Amount</span><div class="b" style="left:1050px;top:421.5px;width:8px;height:1px;border-top:1px dotted #888;"></div><span class="t" style="left:1060.56px;top:415.80px;font-size:11px;color:#161620;letter-spacing:0.386px;">Commitment + Actual</span><div class="b" style="left:1050px;top:439.5px;width:8px;height:1px;border-top:1px dotted #888;"></div><span class="t" style="left:1060.56px;top:433.80px;font-size:11px;color:#161620;letter-spacing:0.103px;">Available Balance</span><svg class="b" style="left:1025px;top:491px;" width="14" height="13" viewBox="0 0 14 13"><rect x="0.5" y="0.5" width="12" height="3" fill="#fff" stroke="#8a8a8a" stroke-width="1"/><rect x="0.5" y="4.7" width="12" height="3" fill="#fff" stroke="#8a8a8a" stroke-width="1"/><rect x="0.5" y="8.9" width="12" height="3" fill="#fff" stroke="#8a8a8a" stroke-width="1"/></svg><span class="t" style="left:1048.06px;top:492.20px;font-size:11px;color:#161620;letter-spacing:-0.109px;">Rows</span><svg class="b" style="left:1351px;top:491px;" width="15" height="15" viewBox="0 0 15 15"><defs><linearGradient id="swg" x1="0" y1="0" x2="0" y2="1"><stop offset="0" stop-color="#f4f8fe"/><stop offset="1" stop-color="#dbe6f5"/></linearGradient></defs><rect x="0.5" y="0.5" width="14" height="14" fill="url(#swg)" stroke="#b4c6e6" stroke-width="1"/><rect x="5.2" y="2" width="8" height="2" fill="#e0141c"/><rect x="2" y="2" width="2" height="1.6" fill="#6a7fa8"/><rect x="2" y="5.2" width="2" height="7.7" fill="#1f3f86"/><path d="M6.2 12.3 L13 6.5" stroke="#1f3f86" stroke-width="1.2"/><path d="M5.6 9.9 L5.6 12.9 L8.6 12.9 M10.6 6 H13.6 V9" stroke="#1f3f86" stroke-width="1.2" fill="none"/></svg><div class="b" style="left:1022px;top:513px;width:344px;height:153px;background:#fff;border:1px solid #c3c3c3;box-sizing:border-box;"></div><div class="b" style="left:0px;top:512px;width:1365px;height:30px;overflow:hidden;"><span class="t" style="left:1042.06px;top:5.00px;font-size:11px;color:#161620;letter-spacing:0.016px;">[0CMMT_ITEM] Commitment Item ([18551855//99991231]</span><span class="t" style="left:1329.80px;top:5.00px;font-size:11px;color:#161620;">Net Income</span></div><svg class="b" style="left:1025.7px;top:518.5px;" width="9" height="9" viewBox="0 0 9 9"><rect x="0.5" y="0.5" width="8" height="8" fill="#fff" stroke="#7a7a7a" stroke-width="1"/><path d="M2 4.5 H7 M4.5 2 V7" stroke="#222" stroke-width="1"/></svg><div class="b" style="left:1035px;top:523px;width:4px;height:1px;border-top:1px dotted #888;"></div><div class="b" style="left:1023px;top:649px;width:342px;height:16px;background:#f0f0f0;"></div><div class="b" style="left:1040px;top:649px;width:280px;height:16px;background:#cdcdcd;"></div><svg class="b" style="left:1027px;top:652px;" width="8" height="10" viewBox="0 0 8 10"><path d="M6 1 L2 5 L6 9" stroke="#555" stroke-width="1.8" fill="none"/></svg><svg class="b" style="left:1352px;top:652px;" width="8" height="10" viewBox="0 0 8 10"><path d="M2 1 L6 5 L2 9" stroke="#555" stroke-width="1.8" fill="none"/></svg><svg class="b" style="left:1025px;top:678px;" width="14" height="12" viewBox="0 0 14 12"><path d="M0.8 0.8 H12.8 L8 6 V11 L5.6 9.6 V6 Z" fill="#fff" stroke="#8a8a8a" stroke-width="1" stroke-linejoin="round"/></svg><span class="t" style="left:1048.06px;top:677.60px;font-size:11px;color:#161620;letter-spacing:0.142px;">Background Filter</span><div class="b" style="left:1022px;top:699px;width:344px;height:194px;background:#fff;border:1px solid #c3c3c3;box-sizing:border-box;"></div><div class="b" style="left:1030px;top:713px;width:1px;height:70px;border-left:1px dotted #888;"></div><svg class="b" style="left:1025.7px;top:704.0px;" width="9" height="9" viewBox="0 0 9 9"><rect x="0.5" y="0.5" width="8" height="8" fill="#fff" stroke="#7a7a7a" stroke-width="1"/><path d="M2 4.5 H7 M4.5 2 V7" stroke="#222" stroke-width="1"/></svg><div class="b" style="left:1035px;top:708.2px;width:4px;height:1px;border-top:1px dotted #888;"></div><span class="t" style="left:1042.06px;top:702.50px;font-size:11px;color:#161620;letter-spacing:-0.533px;">[ZFISCYEAR] Fiscal Year</span><svg class="b" style="left:1025.7px;top:722.0px;" width="9" height="9" viewBox="0 0 9 9"><rect x="0.5" y="0.5" width="8" height="8" fill="#fff" stroke="#7a7a7a" stroke-width="1"/><path d="M2 4.5 H7 M4.5 2 V7" stroke="#222" stroke-width="1"/></svg><div class="b" style="left:1035px;top:726.2px;width:4px;height:1px;border-top:1px dotted #888;"></div><span class="t" style="left:1042.06px;top:720.50px;font-size:11px;color:#161620;letter-spacing:-0.076px;">[0FUNC_AREA] Functional area</span><svg class="b" style="left:1025.7px;top:740.0px;" width="9" height="9" viewBox="0 0 9 9"><rect x="0.5" y="0.5" width="8" height="8" fill="#fff" stroke="#7a7a7a" stroke-width="1"/><path d="M2 4.5 H7 M4.5 2 V7" stroke="#222" stroke-width="1"/></svg><div class="b" style="left:1035px;top:744.2px;width:4px;height:1px;border-top:1px dotted #888;"></div><span class="t" style="left:1042.06px;top:738.50px;font-size:11px;color:#161620;letter-spacing:0.106px;">[0FUND] Fund</span><svg class="b" style="left:1025.7px;top:758.0px;" width="9" height="9" viewBox="0 0 9 9"><rect x="0.5" y="0.5" width="8" height="8" fill="#fff" stroke="#7a7a7a" stroke-width="1"/><path d="M2 4.5 H7 M4.5 2 V7" stroke="#222" stroke-width="1"/></svg><div class="b" style="left:1035px;top:762.2px;width:4px;height:1px;border-top:1px dotted #888;"></div><span class="t" style="left:1042.06px;top:756.50px;font-size:11px;color:#161620;letter-spacing:-0.091px;">[ZPU_MEASU] Funded Program</span><svg class="b" style="left:1025.7px;top:776.0px;" width="9" height="9" viewBox="0 0 9 9"><rect x="0.5" y="0.5" width="8" height="8" fill="#fff" stroke="#7a7a7a" stroke-width="1"/><path d="M2 4.5 H7 M4.5 2 V7" stroke="#222" stroke-width="1"/></svg><div class="b" style="left:1035px;top:780.2px;width:4px;height:1px;border-top:1px dotted #888;"></div><span class="t" style="left:1042.06px;top:774.50px;font-size:11px;color:#161620;letter-spacing:-0.140px;">[0FUNDS_CTR] Funds Center</span><div class="b" style="left:672px;top:897px;width:59px;height:26px;background:#fff;border-right:1px solid #666;border-bottom:1px solid #666;box-sizing:border-box;"></div><span class="t" style="left:680.24px;top:902.80px;font-size:11.5px;color:#111;font-weight:700;letter-spacing:-0.540px;">Analysis</span><span class="t" style="left:737.26px;top:902.80px;font-size:11px;color:#161620;letter-spacing:0.656px;">Information</span><div class="b" style="left:806px;top:899px;width:1px;height:22px;background:#777;"></div><span class="t" style="left:813.96px;top:902.80px;font-size:11px;color:#161620;letter-spacing:0.435px;">Components</span><div class="b" style="left:886px;top:899px;width:1px;height:22px;background:#777;"></div><span class="t" style="left:893.76px;top:902.80px;font-size:11px;color:#161620;letter-spacing:0.170px;">Design Rules</span><div class="b" style="left:968px;top:899px;width:1px;height:22px;background:#777;"></div><span class="t" style="left:976.16px;top:902.80px;font-size:11px;color:#161620;letter-spacing:0.086px;">Comments</span><div class="b" style="left:1037px;top:899px;width:1px;height:22px;background:#777;"></div><div class="b" style="left:665px;top:923px;width:705px;height:7px;background:#e6e6e6;"></div><div class="b" style="left:45px;top:25px;width:82px;height:86px;border:3px solid #5a1d8c;box-shadow:2px 3px 5px rgba(0,0,0,.35), inset 2px 3px 5px rgba(0,0,0,.25);box-sizing:border-box;"></div><div class="b" style="left:817px;top:3px;width:86px;height:33px;background:#f3f2f1;"></div><span class="t" style="left:832.68px;top:6.80px;font-size:13px;color:#2b2b2b;letter-spacing:0.221px;">Analysis</span><div class="b" style="left:833px;top:24px;width:50px;height:3px;background:#217346;"></div><div class="b" style="left:817px;top:3px;width:86px;height:33px;border:3px solid #5a1d8c;box-shadow:2px 3px 5px rgba(0,0,0,.35), inset 2px 3px 5px rgba(0,0,0,.25);box-sizing:border-box;"></div><div class="b" style="left:1098px;top:14px;width:67px;height:112px;border:3px solid #5a1d8c;box-shadow:2px 3px 5px rgba(0,0,0,.35), inset 2px 3px 5px rgba(0,0,0,.25);box-sizing:border-box;"></div><svg class="b" style="left:81.9px;top:89.1px;" width="60" height="60" viewBox="0 0 60 60"><defs><radialGradient id="cg5" cx="50%" cy="42%" r="58%"><stop offset="0" stop-color="#a964e4"/><stop offset="0.75" stop-color="#a55fe0"/><stop offset="1" stop-color="#9850d2"/></radialGradient><filter id="cs5" x="-30%" y="-30%" width="160%" height="160%"><feGaussianBlur stdDeviation="1.6"/></filter></defs><circle cx="30.5" cy="32.0" r="23.7" fill="rgba(0,0,0,.38)" filter="url(#cs5)"/><circle cx="30.0" cy="30.0" r="23.7" fill="url(#cg5)"/><path d="M18.5 47.6 Q30.0 52.8 41.5 47.6 Q30.0 50.6 18.5 47.6 Z" fill="rgba(225,190,250,.75)"/><text x="30.0" y="41.9" font-family="Liberation Sans" font-weight="700" font-size="33.5" fill="#fff" text-anchor="middle">5</text></svg><svg class="b" style="left:1131.0px;top:104.9px;" width="60" height="60" viewBox="0 0 60 60"><defs><radialGradient id="cg1" cx="50%" cy="42%" r="58%"><stop offset="0" stop-color="#a964e4"/><stop offset="0.75" stop-color="#a55fe0"/><stop offset="1" stop-color="#9850d2"/></radialGradient><filter id="cs1" x="-30%" y="-30%" width="160%" height="160%"><feGaussianBlur stdDeviation="1.6"/></filter></defs><circle cx="30.5" cy="32.0" r="23.7" fill="rgba(0,0,0,.38)" filter="url(#cs1)"/><circle cx="30.0" cy="30.0" r="23.7" fill="url(#cg1)"/><path d="M18.5 47.6 Q30.0 52.8 41.5 47.6 Q30.0 50.6 18.5 47.6 Z" fill="rgba(225,190,250,.75)"/><path transform="translate(30.0,30.0)" d="M-3.15 -11.2 H3.4 V7.2 H8.2 V11.6 H-7.3 V7.2 H-3.15 V-5.6 L-6.3 -2.6 L-8.6 -5.8 Z" fill="#fff"/></svg><svg class="b" style="left:875.8px;top:338.0px;" width="60" height="60" viewBox="0 0 60 60"><defs><radialGradient id="cg2" cx="50%" cy="42%" r="58%"><stop offset="0" stop-color="#a964e4"/><stop offset="0.75" stop-color="#a55fe0"/><stop offset="1" stop-color="#9850d2"/></radialGradient><filter id="cs2" x="-30%" y="-30%" width="160%" height="160%"><feGaussianBlur stdDeviation="1.6"/></filter></defs><circle cx="30.5" cy="32.0" r="23.7" fill="rgba(0,0,0,.38)" filter="url(#cs2)"/><circle cx="30.0" cy="30.0" r="23.7" fill="url(#cg2)"/><path d="M18.5 47.6 Q30.0 52.8 41.5 47.6 Q30.0 50.6 18.5 47.6 Z" fill="rgba(225,190,250,.75)"/><text x="30.0" y="41.9" font-family="Liberation Sans" font-weight="700" font-size="33.5" fill="#fff" text-anchor="middle">2</text></svg><svg class="b" style="left:1101.7px;top:298.3px;" width="60" height="60" viewBox="0 0 60 60"><defs><radialGradient id="cg3" cx="50%" cy="42%" r="58%"><stop offset="0" stop-color="#a964e4"/><stop offset="0.75" stop-color="#a55fe0"/><stop offset="1" stop-color="#9850d2"/></radialGradient><filter id="cs3" x="-30%" y="-30%" width="160%" height="160%"><feGaussianBlur stdDeviation="1.6"/></filter></defs><circle cx="30.5" cy="32.0" r="23.7" fill="rgba(0,0,0,.38)" filter="url(#cs3)"/><circle cx="30.0" cy="30.0" r="23.7" fill="url(#cg3)"/><path d="M18.5 47.6 Q30.0 52.8 41.5 47.6 Q30.0 50.6 18.5 47.6 Z" fill="rgba(225,190,250,.75)"/><text x="30.0" y="41.9" font-family="Liberation Sans" font-weight="700" font-size="33.5" fill="#fff" text-anchor="middle">3</text></svg><svg class="b" style="left:968.0px;top:483.29999999999995px;" width="60" height="60" viewBox="0 0 60 60"><defs><radialGradient id="cg4" cx="50%" cy="42%" r="58%"><stop offset="0" stop-color="#a964e4"/><stop offset="0.75" stop-color="#a55fe0"/><stop offset="1" stop-color="#9850d2"/></radialGradient><filter id="cs4" x="-30%" y="-30%" width="160%" height="160%"><feGaussianBlur stdDeviation="1.6"/></filter></defs><circle cx="30.5" cy="32.0" r="23.7" fill="rgba(0,0,0,.38)" filter="url(#cs4)"/><circle cx="30.0" cy="30.0" r="23.7" fill="url(#cg4)"/><path d="M18.5 47.6 Q30.0 52.8 41.5 47.6 Q30.0 50.6 18.5 47.6 Z" fill="rgba(225,190,250,.75)"/><text x="30.0" y="41.9" font-family="Liberation Sans" font-weight="700" font-size="33.5" fill="#fff" text-anchor="middle">4</text></svg></div></body></html>
